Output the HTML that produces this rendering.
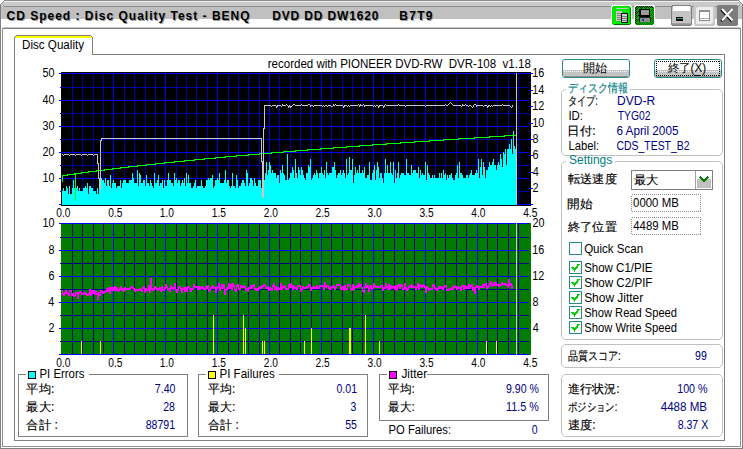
<!DOCTYPE html>
<html><head><meta charset="utf-8"><style>
html,body{margin:0;padding:0;width:743px;height:449px;overflow:hidden;background:#fff}
svg{display:block}
text{font-family:"Liberation Sans",sans-serif;white-space:pre;stroke-width:0px}
</style></head><body>
<svg width="743" height="449" viewBox="0 0 743 449" shape-rendering="crispEdges">
<defs><pattern id="dots" width="2" height="2" patternUnits="userSpaceOnUse"><rect width="1" height="1" fill="#000"/><rect x="1" y="1" width="1" height="1" fill="#004000"/></pattern></defs>
<rect x="0" y="0" width="743" height="449" fill="#ffffff"/>
<rect x="1" y="2" width="741" height="17" fill="#c4c4c4"/>
<rect x="5" y="0" width="733" height="1" fill="#8a8a8a"/>
<rect x="4" y="1" width="735" height="1" fill="#f0f0f0"/>
<rect x="1" y="2" width="741" height="4" fill="#cacaca"/>
<rect x="4" y="6" width="735" height="1" fill="#8c8c8c"/>
<rect x="3" y="5" width="1" height="1" fill="#8c8c8c"/>
<rect x="739" y="5" width="1" height="1" fill="#8c8c8c"/>
<rect x="1" y="7" width="741" height="12" fill="#c0c0c0"/>
<rect x="4" y="0" width="1" height="1" fill="#8a8a8a"/>
<rect x="738" y="0" width="1" height="1" fill="#8a8a8a"/>
<rect x="3" y="1" width="1" height="1" fill="#8a8a8a"/>
<rect x="739" y="1" width="1" height="1" fill="#8a8a8a"/>
<rect x="2" y="2" width="1" height="1" fill="#8a8a8a"/>
<rect x="740" y="2" width="1" height="1" fill="#8a8a8a"/>
<rect x="1" y="3" width="1" height="1" fill="#8a8a8a"/>
<rect x="741" y="3" width="1" height="1" fill="#8a8a8a"/>
<rect x="0" y="4" width="1" height="1" fill="#8a8a8a"/>
<rect x="742" y="4" width="1" height="1" fill="#8a8a8a"/>
<rect x="0" y="0" width="4" height="1" fill="#ffffff"/>
<rect x="0" y="1" width="3" height="1" fill="#ffffff"/>
<rect x="0" y="2" width="2" height="1" fill="#ffffff"/>
<rect x="0" y="3" width="1" height="1" fill="#ffffff"/>
<rect x="739" y="0" width="4" height="1" fill="#ffffff"/>
<rect x="740" y="1" width="3" height="1" fill="#ffffff"/>
<rect x="741" y="2" width="2" height="1" fill="#ffffff"/>
<rect x="742" y="3" width="1" height="1" fill="#ffffff"/>
<rect x="0" y="5" width="1" height="444" fill="#808080"/>
<rect x="1" y="19" width="1" height="429" fill="#ffffff"/>
<rect x="2" y="28" width="1" height="419" fill="#909090"/>
<rect x="742" y="5" width="1" height="444" fill="#808080"/>
<rect x="741" y="19" width="1" height="429" fill="#ffffff"/>
<rect x="740" y="28" width="1" height="419" fill="#909090"/>
<rect x="0" y="448" width="743" height="1" fill="#808080"/>
<rect x="2" y="446" width="739" height="1" fill="#909090"/>
<rect x="3" y="27" width="737" height="1" fill="#c8c8c8"/>
<rect x="2" y="28" width="739" height="1" fill="#808080"/>
<text stroke="#9a9a9a" x="7.51" y="21" font-size="12" fill="#9a9a9a" font-weight="bold" letter-spacing="0.999">CD Speed : Disc Quality Test - BENQ</text>
<text stroke="#000000" x="6.51" y="20" font-size="12" fill="#000000" font-weight="bold" letter-spacing="0.999">CD Speed : Disc Quality Test - BENQ</text>
<text stroke="#9a9a9a" x="273.20" y="21" font-size="12" fill="#9a9a9a" font-weight="bold" letter-spacing="0.856">DVD DD DW1620</text>
<text stroke="#000000" x="272.20" y="20" font-size="12" fill="#000000" font-weight="bold" letter-spacing="0.856">DVD DD DW1620</text>
<text stroke="#9a9a9a" x="400.20" y="21" font-size="12" fill="#9a9a9a" font-weight="bold" letter-spacing="1.301">B7T9</text>
<text stroke="#000000" x="399.20" y="20" font-size="12" fill="#000000" font-weight="bold" letter-spacing="1.301">B7T9</text>
<rect x="611" y="5" width="21" height="21" fill="#ffffff" rx="3"/>
<rect x="612" y="6" width="19" height="19" fill="#00e800" rx="3"/>
<rect x="614" y="24" width="16" height="1" fill="#007000"/>
<rect x="630" y="8" width="1" height="16" fill="#008800"/>
<rect x="616" y="11" width="6" height="10" fill="#c8c8c8"/>
<rect x="617" y="13" width="5" height="1" fill="#808080"/>
<rect x="617" y="15" width="5" height="1" fill="#808080"/>
<rect x="617" y="17" width="5" height="1" fill="#808080"/>
<rect x="617" y="19" width="5" height="1" fill="#808080"/>
<rect x="621" y="13" width="7" height="10" fill="#000000"/>
<rect x="622" y="14" width="5" height="8" fill="#d0d0d0"/>
<rect x="622" y="16" width="5" height="1" fill="#808080"/>
<rect x="622" y="18" width="5" height="1" fill="#808080"/>
<rect x="622" y="20" width="5" height="1" fill="#808080"/>
<rect x="616" y="8" width="12" height="1" fill="#b0d0b0"/>
<rect x="634" y="5" width="21" height="21" fill="#ffffff" rx="3"/>
<rect x="635" y="6" width="19" height="19" fill="#00b000" rx="3"/>
<rect x="635" y="8" width="1" height="1" fill="#000000"/>
<rect x="635" y="10" width="1" height="1" fill="#000000"/>
<rect x="635" y="12" width="1" height="1" fill="#000000"/>
<rect x="635" y="14" width="1" height="1" fill="#000000"/>
<rect x="635" y="16" width="1" height="1" fill="#000000"/>
<rect x="635" y="18" width="1" height="1" fill="#000000"/>
<rect x="635" y="20" width="1" height="1" fill="#000000"/>
<rect x="635" y="22" width="1" height="1" fill="#000000"/>
<rect x="636" y="7" width="1" height="1" fill="#000000"/>
<rect x="636" y="9" width="1" height="1" fill="#000000"/>
<rect x="636" y="11" width="1" height="1" fill="#000000"/>
<rect x="636" y="13" width="1" height="1" fill="#000000"/>
<rect x="636" y="15" width="1" height="1" fill="#000000"/>
<rect x="636" y="17" width="1" height="1" fill="#000000"/>
<rect x="636" y="19" width="1" height="1" fill="#000000"/>
<rect x="636" y="21" width="1" height="1" fill="#000000"/>
<rect x="636" y="23" width="1" height="1" fill="#000000"/>
<rect x="637" y="6" width="1" height="1" fill="#000000"/>
<rect x="637" y="8" width="1" height="1" fill="#000000"/>
<rect x="637" y="12" width="1" height="1" fill="#000000"/>
<rect x="637" y="16" width="1" height="1" fill="#006000"/>
<rect x="637" y="20" width="1" height="1" fill="#006000"/>
<rect x="637" y="24" width="1" height="1" fill="#006000"/>
<rect x="638" y="7" width="1" height="1" fill="#000000"/>
<rect x="638" y="11" width="1" height="1" fill="#000000"/>
<rect x="638" y="15" width="1" height="1" fill="#000000"/>
<rect x="638" y="19" width="1" height="1" fill="#006000"/>
<rect x="638" y="23" width="1" height="1" fill="#006000"/>
<rect x="639" y="6" width="1" height="1" fill="#000000"/>
<rect x="639" y="10" width="1" height="1" fill="#000000"/>
<rect x="639" y="14" width="1" height="1" fill="#000000"/>
<rect x="639" y="18" width="1" height="1" fill="#006000"/>
<rect x="639" y="22" width="1" height="1" fill="#006000"/>
<rect x="639" y="24" width="1" height="1" fill="#006000"/>
<rect x="640" y="7" width="1" height="1" fill="#000000"/>
<rect x="640" y="9" width="1" height="1" fill="#000000"/>
<rect x="640" y="13" width="1" height="1" fill="#000000"/>
<rect x="640" y="17" width="1" height="1" fill="#006000"/>
<rect x="640" y="21" width="1" height="1" fill="#006000"/>
<rect x="640" y="23" width="1" height="1" fill="#006000"/>
<rect x="641" y="6" width="1" height="1" fill="#000000"/>
<rect x="641" y="8" width="1" height="1" fill="#000000"/>
<rect x="641" y="12" width="1" height="1" fill="#000000"/>
<rect x="641" y="16" width="1" height="1" fill="#006000"/>
<rect x="641" y="20" width="1" height="1" fill="#006000"/>
<rect x="641" y="24" width="1" height="1" fill="#006000"/>
<rect x="642" y="7" width="1" height="1" fill="#000000"/>
<rect x="642" y="11" width="1" height="1" fill="#000000"/>
<rect x="642" y="15" width="1" height="1" fill="#000000"/>
<rect x="642" y="19" width="1" height="1" fill="#006000"/>
<rect x="642" y="23" width="1" height="1" fill="#006000"/>
<rect x="643" y="6" width="1" height="1" fill="#000000"/>
<rect x="643" y="10" width="1" height="1" fill="#000000"/>
<rect x="643" y="14" width="1" height="1" fill="#000000"/>
<rect x="643" y="18" width="1" height="1" fill="#006000"/>
<rect x="643" y="22" width="1" height="1" fill="#006000"/>
<rect x="643" y="24" width="1" height="1" fill="#006000"/>
<rect x="644" y="7" width="1" height="1" fill="#000000"/>
<rect x="644" y="9" width="1" height="1" fill="#000000"/>
<rect x="644" y="13" width="1" height="1" fill="#000000"/>
<rect x="644" y="17" width="1" height="1" fill="#006000"/>
<rect x="644" y="21" width="1" height="1" fill="#006000"/>
<rect x="644" y="23" width="1" height="1" fill="#006000"/>
<rect x="645" y="6" width="1" height="1" fill="#000000"/>
<rect x="645" y="8" width="1" height="1" fill="#006000"/>
<rect x="645" y="12" width="1" height="1" fill="#006000"/>
<rect x="645" y="16" width="1" height="1" fill="#006000"/>
<rect x="645" y="20" width="1" height="1" fill="#006000"/>
<rect x="645" y="24" width="1" height="1" fill="#006000"/>
<rect x="646" y="7" width="1" height="1" fill="#000000"/>
<rect x="646" y="11" width="1" height="1" fill="#006000"/>
<rect x="646" y="15" width="1" height="1" fill="#006000"/>
<rect x="646" y="19" width="1" height="1" fill="#006000"/>
<rect x="646" y="23" width="1" height="1" fill="#006000"/>
<rect x="647" y="6" width="1" height="1" fill="#000000"/>
<rect x="647" y="10" width="1" height="1" fill="#006000"/>
<rect x="647" y="14" width="1" height="1" fill="#006000"/>
<rect x="647" y="18" width="1" height="1" fill="#006000"/>
<rect x="647" y="22" width="1" height="1" fill="#006000"/>
<rect x="647" y="24" width="1" height="1" fill="#006000"/>
<rect x="648" y="7" width="1" height="1" fill="#000000"/>
<rect x="648" y="9" width="1" height="1" fill="#006000"/>
<rect x="648" y="13" width="1" height="1" fill="#006000"/>
<rect x="648" y="17" width="1" height="1" fill="#006000"/>
<rect x="648" y="21" width="1" height="1" fill="#006000"/>
<rect x="648" y="23" width="1" height="1" fill="#006000"/>
<rect x="649" y="6" width="1" height="1" fill="#000000"/>
<rect x="649" y="8" width="1" height="1" fill="#006000"/>
<rect x="649" y="12" width="1" height="1" fill="#006000"/>
<rect x="649" y="16" width="1" height="1" fill="#006000"/>
<rect x="649" y="20" width="1" height="1" fill="#006000"/>
<rect x="649" y="24" width="1" height="1" fill="#006000"/>
<rect x="650" y="7" width="1" height="1" fill="#000000"/>
<rect x="650" y="11" width="1" height="1" fill="#006000"/>
<rect x="650" y="15" width="1" height="1" fill="#006000"/>
<rect x="650" y="19" width="1" height="1" fill="#006000"/>
<rect x="650" y="23" width="1" height="1" fill="#006000"/>
<rect x="651" y="6" width="1" height="1" fill="#000000"/>
<rect x="651" y="10" width="1" height="1" fill="#006000"/>
<rect x="651" y="14" width="1" height="1" fill="#006000"/>
<rect x="651" y="18" width="1" height="1" fill="#006000"/>
<rect x="651" y="22" width="1" height="1" fill="#006000"/>
<rect x="651" y="24" width="1" height="1" fill="#006000"/>
<rect x="652" y="7" width="1" height="1" fill="#000000"/>
<rect x="652" y="9" width="1" height="1" fill="#006000"/>
<rect x="652" y="11" width="1" height="1" fill="#006000"/>
<rect x="652" y="13" width="1" height="1" fill="#006000"/>
<rect x="652" y="15" width="1" height="1" fill="#006000"/>
<rect x="652" y="17" width="1" height="1" fill="#006000"/>
<rect x="652" y="19" width="1" height="1" fill="#006000"/>
<rect x="652" y="21" width="1" height="1" fill="#006000"/>
<rect x="652" y="23" width="1" height="1" fill="#006000"/>
<rect x="653" y="8" width="1" height="1" fill="#006000"/>
<rect x="653" y="10" width="1" height="1" fill="#006000"/>
<rect x="653" y="12" width="1" height="1" fill="#006000"/>
<rect x="653" y="14" width="1" height="1" fill="#006000"/>
<rect x="653" y="16" width="1" height="1" fill="#006000"/>
<rect x="653" y="18" width="1" height="1" fill="#006000"/>
<rect x="653" y="20" width="1" height="1" fill="#006000"/>
<rect x="653" y="22" width="1" height="1" fill="#006000"/>
<rect x="639" y="9" width="11" height="8" fill="#000000"/>
<rect x="641" y="10" width="8" height="5" fill="#9a9a9a"/>
<rect x="639" y="17" width="12" height="5" fill="#202020"/>
<rect x="640" y="18" width="10" height="4" fill="#8c8c8c"/>
<rect x="642" y="19" width="2" height="2" fill="#2040a0"/>
<rect x="671" y="5" width="21" height="21" fill="#808080" rx="3"/>
<rect x="672" y="6" width="19" height="19" fill="#c4c4c4" rx="2"/>
<rect x="673" y="6" width="17" height="5" fill="#ffffff"/>
<rect x="672" y="23" width="19" height="1" fill="#a0a0a0"/>
<rect x="672" y="24" width="19" height="1" fill="#909090"/>
<rect x="676" y="17" width="7" height="4" fill="#000000"/>
<rect x="677" y="18" width="6" height="1" fill="#40a0a0"/>
<rect x="694" y="5" width="21" height="21" fill="#c8c8c8" rx="3"/>
<rect x="696" y="7" width="17" height="17" fill="#ececec" rx="2"/>
<rect x="699" y="10" width="11" height="11" fill="#909090"/>
<rect x="700" y="12" width="9" height="8" fill="#ffffff"/>
<rect x="700" y="18" width="9" height="1" fill="#b0b0b0"/>
<rect x="717" y="5" width="21" height="21" fill="#7c7c7c" rx="3"/>
<path d="M722 9 L732.5 20.5 M732.5 9 L722 20.5" stroke="#000" stroke-width="2.4" shape-rendering="auto" transform="translate(-0.7,0.7)"/>
<path d="M722 9 L732.5 20.5 M732.5 9 L722 20.5" stroke="#fff" stroke-width="2" shape-rendering="auto"/>
<rect x="16" y="35" width="75" height="1" fill="#808080"/>
<rect x="15" y="36" width="1" height="1" fill="#808080"/>
<rect x="91" y="36" width="1" height="1" fill="#808080"/>
<rect x="14" y="37" width="1" height="404" fill="#808080"/>
<rect x="92" y="37" width="1" height="18" fill="#808080"/>
<rect x="16" y="36" width="75" height="1" fill="#ffff00"/>
<rect x="15" y="37" width="77" height="1" fill="#ffff00"/>
<rect x="92" y="54" width="633" height="1" fill="#808080"/>
<rect x="724" y="54" width="1" height="387" fill="#808080"/>
<rect x="14" y="440" width="711" height="1" fill="#808080"/>
<text stroke="#000" x="22.05" y="49" font-size="12" fill="#000" textLength="61.98" lengthAdjust="spacingAndGlyphs">Disc Quality</text>
<rect x="61" y="72" width="470" height="134" fill="#000000"/>
<rect x="72" y="73" width="1" height="133" fill="#0000a8"/>
<rect x="82" y="73" width="1" height="133" fill="#0000a8"/>
<rect x="93" y="73" width="1" height="133" fill="#0000a8"/>
<rect x="103" y="73" width="1" height="133" fill="#0000a8"/>
<rect x="113" y="73" width="1" height="133" fill="#0000ff"/>
<rect x="124" y="73" width="1" height="133" fill="#0000a8"/>
<rect x="134" y="73" width="1" height="133" fill="#0000a8"/>
<rect x="145" y="73" width="1" height="133" fill="#0000a8"/>
<rect x="155" y="73" width="1" height="133" fill="#0000a8"/>
<rect x="165" y="73" width="1" height="133" fill="#0000ff"/>
<rect x="176" y="73" width="1" height="133" fill="#0000a8"/>
<rect x="186" y="73" width="1" height="133" fill="#0000a8"/>
<rect x="196" y="73" width="1" height="133" fill="#0000a8"/>
<rect x="207" y="73" width="1" height="133" fill="#0000a8"/>
<rect x="217" y="73" width="1" height="133" fill="#0000ff"/>
<rect x="228" y="73" width="1" height="133" fill="#0000a8"/>
<rect x="238" y="73" width="1" height="133" fill="#0000a8"/>
<rect x="248" y="73" width="1" height="133" fill="#0000a8"/>
<rect x="259" y="73" width="1" height="133" fill="#0000a8"/>
<rect x="269" y="73" width="1" height="133" fill="#0000ff"/>
<rect x="279" y="73" width="1" height="133" fill="#0000a8"/>
<rect x="290" y="73" width="1" height="133" fill="#0000a8"/>
<rect x="300" y="73" width="1" height="133" fill="#0000a8"/>
<rect x="311" y="73" width="1" height="133" fill="#0000a8"/>
<rect x="321" y="73" width="1" height="133" fill="#0000ff"/>
<rect x="331" y="73" width="1" height="133" fill="#0000a8"/>
<rect x="342" y="73" width="1" height="133" fill="#0000a8"/>
<rect x="352" y="73" width="1" height="133" fill="#0000a8"/>
<rect x="362" y="73" width="1" height="133" fill="#0000a8"/>
<rect x="373" y="73" width="1" height="133" fill="#0000ff"/>
<rect x="383" y="73" width="1" height="133" fill="#0000a8"/>
<rect x="394" y="73" width="1" height="133" fill="#0000a8"/>
<rect x="404" y="73" width="1" height="133" fill="#0000a8"/>
<rect x="414" y="73" width="1" height="133" fill="#0000a8"/>
<rect x="425" y="73" width="1" height="133" fill="#0000ff"/>
<rect x="435" y="73" width="1" height="133" fill="#0000a8"/>
<rect x="445" y="73" width="1" height="133" fill="#0000a8"/>
<rect x="456" y="73" width="1" height="133" fill="#0000a8"/>
<rect x="466" y="73" width="1" height="133" fill="#0000a8"/>
<rect x="477" y="73" width="1" height="133" fill="#0000ff"/>
<rect x="487" y="73" width="1" height="133" fill="#0000a8"/>
<rect x="497" y="73" width="1" height="133" fill="#0000a8"/>
<rect x="508" y="73" width="1" height="133" fill="#0000a8"/>
<rect x="518" y="73" width="1" height="133" fill="#0000a8"/>
<rect x="59" y="204" width="470" height="1" fill="#0000ff"/>
<rect x="60" y="191" width="469" height="1" fill="#0000a8"/>
<rect x="59" y="178" width="470" height="1" fill="#0000ff"/>
<rect x="60" y="165" width="469" height="1" fill="#0000a8"/>
<rect x="59" y="152" width="470" height="1" fill="#0000ff"/>
<rect x="60" y="139" width="469" height="1" fill="#0000a8"/>
<rect x="59" y="126" width="470" height="1" fill="#0000ff"/>
<rect x="60" y="113" width="469" height="1" fill="#0000a8"/>
<rect x="59" y="100" width="470" height="1" fill="#0000ff"/>
<rect x="60" y="87" width="469" height="1" fill="#0000a8"/>
<rect x="59" y="73" width="470" height="1" fill="#0000ff"/>
<rect x="529" y="204" width="4" height="1" fill="#0000ff"/>
<rect x="529" y="196" width="2" height="1" fill="#0000ff"/>
<rect x="529" y="188" width="4" height="1" fill="#0000ff"/>
<rect x="529" y="180" width="2" height="1" fill="#0000ff"/>
<rect x="529" y="172" width="4" height="1" fill="#0000ff"/>
<rect x="529" y="164" width="2" height="1" fill="#0000ff"/>
<rect x="529" y="155" width="4" height="1" fill="#0000ff"/>
<rect x="529" y="147" width="2" height="1" fill="#0000ff"/>
<rect x="529" y="139" width="4" height="1" fill="#0000ff"/>
<rect x="529" y="131" width="2" height="1" fill="#0000ff"/>
<rect x="529" y="123" width="4" height="1" fill="#0000ff"/>
<rect x="529" y="114" width="2" height="1" fill="#0000ff"/>
<rect x="529" y="106" width="4" height="1" fill="#0000ff"/>
<rect x="529" y="98" width="2" height="1" fill="#0000ff"/>
<rect x="529" y="90" width="4" height="1" fill="#0000ff"/>
<rect x="529" y="82" width="2" height="1" fill="#0000ff"/>
<rect x="529" y="73" width="4" height="1" fill="#0000ff"/>
<rect x="59" y="73" width="474" height="1" fill="#0000ff"/>
<path d="M62 205L62 191L63 191L63 188L64 188L64 191L65 191L65 191L66 191L66 186L67 186L67 188L68 188L68 194L69 194L69 186L70 186L70 194L71 194L71 194L72 194L72 188L73 188L73 180L74 180L74 188L75 188L75 188L76 188L76 188L77 188L77 186L78 186L78 191L79 191L79 188L80 188L80 191L81 191L81 191L82 191L82 191L83 191L83 188L84 188L84 188L85 188L85 186L86 186L86 188L87 188L87 183L88 183L88 194L89 194L89 186L90 186L90 186L91 186L91 188L92 188L92 188L93 188L93 191L94 191L94 191L95 191L95 191L96 191L96 194L97 194L97 188L98 188L98 194L99 194L99 188L100 188L100 173L101 173L101 178L102 178L102 180L103 180L103 180L104 180L104 183L105 183L105 178L106 178L106 186L107 186L107 180L108 180L108 180L109 180L109 186L110 186L110 175L111 175L111 188L112 188L112 183L113 183L113 180L114 180L114 183L115 183L115 183L116 183L116 188L117 188L117 186L118 186L118 186L119 186L119 186L120 186L120 180L121 180L121 188L122 188L122 183L123 183L123 180L124 180L124 180L125 180L125 180L126 180L126 183L127 183L127 183L128 183L128 183L129 183L129 180L130 180L130 180L131 180L131 180L132 180L132 173L133 173L133 178L134 178L134 183L135 183L135 183L136 183L136 183L137 183L137 170L138 170L138 186L139 186L139 173L140 173L140 175L141 175L141 183L142 183L142 183L143 183L143 180L144 180L144 180L145 180L145 186L146 186L146 175L147 175L147 183L148 183L148 183L149 183L149 186L150 186L150 180L151 180L151 183L152 183L152 186L153 186L153 188L154 188L154 173L155 173L155 183L156 183L156 183L157 183L157 180L158 180L158 175L159 175L159 186L160 186L160 183L161 183L161 183L162 183L162 180L163 180L163 188L164 188L164 180L165 180L165 186L166 186L166 186L167 186L167 180L168 180L168 173L169 173L169 180L170 180L170 180L171 180L171 183L172 183L172 183L173 183L173 186L174 186L174 173L175 173L175 180L176 180L176 178L177 178L177 183L178 183L178 180L179 180L179 180L180 180L180 186L181 186L181 183L182 183L182 180L183 180L183 183L184 183L184 178L185 178L185 186L186 186L186 173L187 173L187 183L188 183L188 175L189 175L189 183L190 183L190 183L191 183L191 188L192 188L192 188L193 188L193 186L194 186L194 183L195 183L195 180L196 180L196 188L197 188L197 186L198 186L198 186L199 186L199 186L200 186L200 186L201 186L201 180L202 180L202 186L203 186L203 188L204 188L204 188L205 188L205 186L206 186L206 180L207 180L207 180L208 180L208 178L209 178L209 180L210 180L210 178L211 178L211 178L212 178L212 175L213 175L213 188L214 188L214 186L215 186L215 180L216 180L216 180L217 180L217 178L218 178L218 180L219 180L219 173L220 173L220 183L221 183L221 183L222 183L222 183L223 183L223 183L224 183L224 180L225 180L225 170L226 170L226 183L227 183L227 180L228 180L228 180L229 180L229 186L230 186L230 188L231 188L231 186L232 186L232 173L233 173L233 186L234 186L234 186L235 186L235 188L236 188L236 175L237 175L237 180L238 180L238 188L239 188L239 186L240 186L240 186L241 186L241 183L242 183L242 180L243 180L243 180L244 180L244 183L245 183L245 186L246 186L246 170L247 170L247 173L248 173L248 186L249 186L249 183L250 183L250 178L251 178L251 178L252 178L252 180L253 180L253 186L254 186L254 178L255 178L255 183L256 183L256 186L257 186L257 186L258 186L258 180L259 180L259 180L260 180L260 180L261 180L261 188L262 188L262 196L263 196L263 194L264 194L264 180L265 180L265 173L266 173L266 162L267 162L267 175L268 175L268 170L269 170L269 162L270 162L270 165L271 165L271 173L272 173L272 170L273 170L273 173L274 173L274 173L275 173L275 173L276 173L276 178L277 178L277 175L278 175L278 175L279 175L279 183L280 183L280 170L281 170L281 173L282 173L282 165L283 165L283 173L284 173L284 175L285 175L285 180L286 180L286 180L287 180L287 154L288 154L288 180L289 180L289 178L290 178L290 173L291 173L291 173L292 173L292 167L293 167L293 170L294 170L294 178L295 178L295 159L296 159L296 173L297 173L297 178L298 178L298 167L299 167L299 170L300 170L300 175L301 175L301 167L302 167L302 170L303 170L303 175L304 175L304 178L305 178L305 180L306 180L306 173L307 173L307 173L308 173L308 165L309 165L309 167L310 167L310 159L311 159L311 180L312 180L312 178L313 178L313 175L314 175L314 173L315 173L315 175L316 175L316 170L317 170L317 173L318 173L318 178L319 178L319 173L320 173L320 173L321 173L321 167L322 167L322 173L323 173L323 175L324 175L324 170L325 170L325 178L326 178L326 162L327 162L327 173L328 173L328 175L329 175L329 173L330 173L330 173L331 173L331 173L332 173L332 167L333 167L333 167L334 167L334 162L335 162L335 170L336 170L336 178L337 178L337 175L338 175L338 173L339 173L339 173L340 173L340 170L341 170L341 175L342 175L342 173L343 173L343 170L344 170L344 173L345 173L345 178L346 178L346 159L347 159L347 175L348 175L348 173L349 173L349 157L350 157L350 170L351 170L351 170L352 170L352 159L353 159L353 183L354 183L354 175L355 175L355 167L356 167L356 173L357 173L357 170L358 170L358 173L359 173L359 165L360 165L360 173L361 173L361 173L362 173L362 170L363 170L363 173L364 173L364 167L365 167L365 178L366 178L366 178L367 178L367 175L368 175L368 175L369 175L369 162L370 162L370 180L371 180L371 180L372 180L372 173L373 173L373 170L374 170L374 165L375 165L375 180L376 180L376 170L377 170L377 162L378 162L378 167L379 167L379 178L380 178L380 173L381 173L381 173L382 173L382 178L383 178L383 183L384 183L384 173L385 173L385 159L386 159L386 173L387 173L387 165L388 165L388 173L389 173L389 173L390 173L390 162L391 162L391 173L392 173L392 175L393 175L393 162L394 162L394 183L395 183L395 170L396 170L396 178L397 178L397 173L398 173L398 162L399 162L399 178L400 178L400 175L401 175L401 173L402 173L402 173L403 173L403 173L404 173L404 175L405 175L405 175L406 175L406 159L407 159L407 173L408 173L408 173L409 173L409 175L410 175L410 175L411 175L411 165L412 165L412 173L413 173L413 170L414 170L414 170L415 170L415 170L416 170L416 173L417 173L417 173L418 173L418 167L419 167L419 178L420 178L420 170L421 170L421 175L422 175L422 173L423 173L423 175L424 175L424 175L425 175L425 162L426 162L426 180L427 180L427 165L428 165L428 173L429 173L429 175L430 175L430 178L431 178L431 178L432 178L432 175L433 175L433 178L434 178L434 175L435 175L435 178L436 178L436 178L437 178L437 178L438 178L438 178L439 178L439 173L440 173L440 178L441 178L441 173L442 173L442 178L443 178L443 170L444 170L444 175L445 175L445 173L446 173L446 180L447 180L447 175L448 175L448 178L449 178L449 175L450 175L450 175L451 175L451 173L452 173L452 178L453 178L453 180L454 180L454 180L455 180L455 175L456 175L456 173L457 173L457 165L458 165L458 178L459 178L459 162L460 162L460 173L461 173L461 173L462 173L462 175L463 175L463 178L464 178L464 178L465 178L465 178L466 178L466 175L467 175L467 175L468 175L468 178L469 178L469 175L470 175L470 173L471 173L471 170L472 170L472 175L473 175L473 175L474 175L474 175L475 175L475 173L476 173L476 170L477 170L477 173L478 173L478 159L479 159L479 178L480 178L480 167L481 167L481 159L482 159L482 175L483 175L483 162L484 162L484 167L485 167L485 178L486 178L486 170L487 170L487 170L488 170L488 167L489 167L489 162L490 162L490 165L491 165L491 165L492 165L492 162L493 162L493 159L494 159L494 165L495 165L495 165L496 165L496 170L497 170L497 165L498 165L498 162L499 162L499 165L500 165L500 154L501 154L501 159L502 159L502 167L503 167L503 152L504 152L504 154L505 154L505 149L506 149L506 165L507 165L507 149L508 149L508 149L509 149L509 144L510 144L510 149L511 149L511 139L512 139L512 154L513 154L513 131L514 131L514 146L515 146L515 149L516 149L516 141L517 141L517 205Z" fill="#00ffff" shape-rendering="crispEdges"/>
<rect x="75" y="173" width="1" height="28" fill="#00ff00"/>
<rect x="62" y="176" width="1" height="6" fill="#00ff00"/>
<rect x="62" y="175" width="1" height="1" fill="#00ff00"/>
<rect x="63" y="175" width="1" height="1" fill="#00ff00"/>
<rect x="64" y="175" width="1" height="1" fill="#00ff00"/>
<rect x="65" y="175" width="1" height="1" fill="#00ff00"/>
<rect x="66" y="175" width="1" height="1" fill="#00ff00"/>
<rect x="67" y="174" width="1" height="2" fill="#00ff00"/>
<rect x="68" y="174" width="1" height="1" fill="#00ff00"/>
<rect x="69" y="174" width="1" height="1" fill="#00ff00"/>
<rect x="70" y="174" width="1" height="1" fill="#00ff00"/>
<rect x="71" y="174" width="1" height="1" fill="#00ff00"/>
<rect x="72" y="174" width="1" height="1" fill="#00ff00"/>
<rect x="73" y="174" width="1" height="1" fill="#00ff00"/>
<rect x="74" y="173" width="1" height="2" fill="#00ff00"/>
<rect x="75" y="173" width="1" height="1" fill="#00ff00"/>
<rect x="76" y="173" width="1" height="1" fill="#00ff00"/>
<rect x="77" y="173" width="1" height="1" fill="#00ff00"/>
<rect x="78" y="173" width="1" height="1" fill="#00ff00"/>
<rect x="79" y="173" width="1" height="1" fill="#00ff00"/>
<rect x="80" y="173" width="1" height="1" fill="#00ff00"/>
<rect x="81" y="172" width="1" height="2" fill="#00ff00"/>
<rect x="82" y="172" width="1" height="1" fill="#00ff00"/>
<rect x="83" y="172" width="1" height="1" fill="#00ff00"/>
<rect x="84" y="172" width="1" height="1" fill="#00ff00"/>
<rect x="85" y="172" width="1" height="1" fill="#00ff00"/>
<rect x="86" y="172" width="1" height="1" fill="#00ff00"/>
<rect x="87" y="172" width="1" height="1" fill="#00ff00"/>
<rect x="88" y="171" width="1" height="2" fill="#00ff00"/>
<rect x="89" y="171" width="1" height="1" fill="#00ff00"/>
<rect x="90" y="171" width="1" height="1" fill="#00ff00"/>
<rect x="91" y="171" width="1" height="1" fill="#00ff00"/>
<rect x="92" y="171" width="1" height="1" fill="#00ff00"/>
<rect x="93" y="171" width="1" height="1" fill="#00ff00"/>
<rect x="94" y="171" width="1" height="1" fill="#00ff00"/>
<rect x="95" y="171" width="1" height="1" fill="#00ff00"/>
<rect x="96" y="170" width="1" height="2" fill="#00ff00"/>
<rect x="97" y="170" width="1" height="1" fill="#00ff00"/>
<rect x="98" y="170" width="1" height="1" fill="#00ff00"/>
<rect x="99" y="170" width="1" height="1" fill="#00ff00"/>
<rect x="100" y="170" width="1" height="1" fill="#00ff00"/>
<rect x="101" y="170" width="1" height="1" fill="#00ff00"/>
<rect x="102" y="170" width="1" height="1" fill="#00ff00"/>
<rect x="103" y="170" width="1" height="1" fill="#00ff00"/>
<rect x="104" y="169" width="1" height="2" fill="#00ff00"/>
<rect x="105" y="169" width="1" height="1" fill="#00ff00"/>
<rect x="106" y="169" width="1" height="1" fill="#00ff00"/>
<rect x="107" y="169" width="1" height="1" fill="#00ff00"/>
<rect x="108" y="169" width="1" height="1" fill="#00ff00"/>
<rect x="109" y="169" width="1" height="1" fill="#00ff00"/>
<rect x="110" y="169" width="1" height="1" fill="#00ff00"/>
<rect x="111" y="169" width="1" height="1" fill="#00ff00"/>
<rect x="112" y="168" width="1" height="2" fill="#00ff00"/>
<rect x="113" y="168" width="1" height="1" fill="#00ff00"/>
<rect x="114" y="168" width="1" height="1" fill="#00ff00"/>
<rect x="115" y="168" width="1" height="1" fill="#00ff00"/>
<rect x="116" y="168" width="1" height="1" fill="#00ff00"/>
<rect x="117" y="168" width="1" height="1" fill="#00ff00"/>
<rect x="118" y="168" width="1" height="1" fill="#00ff00"/>
<rect x="119" y="168" width="1" height="1" fill="#00ff00"/>
<rect x="120" y="167" width="1" height="2" fill="#00ff00"/>
<rect x="121" y="167" width="1" height="1" fill="#00ff00"/>
<rect x="122" y="167" width="1" height="1" fill="#00ff00"/>
<rect x="123" y="167" width="1" height="1" fill="#00ff00"/>
<rect x="124" y="167" width="1" height="1" fill="#00ff00"/>
<rect x="125" y="167" width="1" height="1" fill="#00ff00"/>
<rect x="126" y="167" width="1" height="1" fill="#00ff00"/>
<rect x="127" y="167" width="1" height="1" fill="#00ff00"/>
<rect x="128" y="166" width="1" height="2" fill="#00ff00"/>
<rect x="129" y="166" width="1" height="1" fill="#00ff00"/>
<rect x="130" y="166" width="1" height="1" fill="#00ff00"/>
<rect x="131" y="166" width="1" height="1" fill="#00ff00"/>
<rect x="132" y="166" width="1" height="1" fill="#00ff00"/>
<rect x="133" y="166" width="1" height="1" fill="#00ff00"/>
<rect x="134" y="166" width="1" height="1" fill="#00ff00"/>
<rect x="135" y="166" width="1" height="1" fill="#00ff00"/>
<rect x="136" y="166" width="1" height="1" fill="#00ff00"/>
<rect x="137" y="165" width="1" height="2" fill="#00ff00"/>
<rect x="138" y="165" width="1" height="1" fill="#00ff00"/>
<rect x="139" y="165" width="1" height="1" fill="#00ff00"/>
<rect x="140" y="165" width="1" height="1" fill="#00ff00"/>
<rect x="141" y="165" width="1" height="1" fill="#00ff00"/>
<rect x="142" y="165" width="1" height="1" fill="#00ff00"/>
<rect x="143" y="165" width="1" height="1" fill="#00ff00"/>
<rect x="144" y="165" width="1" height="1" fill="#00ff00"/>
<rect x="145" y="165" width="1" height="1" fill="#00ff00"/>
<rect x="146" y="164" width="1" height="2" fill="#00ff00"/>
<rect x="147" y="164" width="1" height="1" fill="#00ff00"/>
<rect x="148" y="164" width="1" height="1" fill="#00ff00"/>
<rect x="149" y="164" width="1" height="1" fill="#00ff00"/>
<rect x="150" y="164" width="1" height="1" fill="#00ff00"/>
<rect x="151" y="164" width="1" height="1" fill="#00ff00"/>
<rect x="152" y="164" width="1" height="1" fill="#00ff00"/>
<rect x="153" y="164" width="1" height="1" fill="#00ff00"/>
<rect x="154" y="164" width="1" height="1" fill="#00ff00"/>
<rect x="155" y="163" width="1" height="2" fill="#00ff00"/>
<rect x="156" y="163" width="1" height="1" fill="#00ff00"/>
<rect x="157" y="163" width="1" height="1" fill="#00ff00"/>
<rect x="158" y="163" width="1" height="1" fill="#00ff00"/>
<rect x="159" y="163" width="1" height="1" fill="#00ff00"/>
<rect x="160" y="163" width="1" height="1" fill="#00ff00"/>
<rect x="161" y="163" width="1" height="1" fill="#00ff00"/>
<rect x="162" y="163" width="1" height="1" fill="#00ff00"/>
<rect x="163" y="163" width="1" height="1" fill="#00ff00"/>
<rect x="164" y="162" width="1" height="2" fill="#00ff00"/>
<rect x="165" y="162" width="1" height="1" fill="#00ff00"/>
<rect x="166" y="162" width="1" height="1" fill="#00ff00"/>
<rect x="167" y="162" width="1" height="1" fill="#00ff00"/>
<rect x="168" y="162" width="1" height="1" fill="#00ff00"/>
<rect x="169" y="162" width="1" height="1" fill="#00ff00"/>
<rect x="170" y="162" width="1" height="1" fill="#00ff00"/>
<rect x="171" y="162" width="1" height="1" fill="#00ff00"/>
<rect x="172" y="162" width="1" height="1" fill="#00ff00"/>
<rect x="173" y="162" width="1" height="1" fill="#00ff00"/>
<rect x="174" y="161" width="1" height="2" fill="#00ff00"/>
<rect x="175" y="161" width="1" height="1" fill="#00ff00"/>
<rect x="176" y="161" width="1" height="1" fill="#00ff00"/>
<rect x="177" y="161" width="1" height="1" fill="#00ff00"/>
<rect x="178" y="161" width="1" height="1" fill="#00ff00"/>
<rect x="179" y="161" width="1" height="1" fill="#00ff00"/>
<rect x="180" y="161" width="1" height="1" fill="#00ff00"/>
<rect x="181" y="161" width="1" height="1" fill="#00ff00"/>
<rect x="182" y="161" width="1" height="1" fill="#00ff00"/>
<rect x="183" y="161" width="1" height="1" fill="#00ff00"/>
<rect x="184" y="160" width="1" height="2" fill="#00ff00"/>
<rect x="185" y="160" width="1" height="1" fill="#00ff00"/>
<rect x="186" y="160" width="1" height="1" fill="#00ff00"/>
<rect x="187" y="160" width="1" height="1" fill="#00ff00"/>
<rect x="188" y="160" width="1" height="1" fill="#00ff00"/>
<rect x="189" y="160" width="1" height="1" fill="#00ff00"/>
<rect x="190" y="160" width="1" height="1" fill="#00ff00"/>
<rect x="191" y="160" width="1" height="1" fill="#00ff00"/>
<rect x="192" y="160" width="1" height="1" fill="#00ff00"/>
<rect x="193" y="160" width="1" height="1" fill="#00ff00"/>
<rect x="194" y="159" width="1" height="2" fill="#00ff00"/>
<rect x="195" y="159" width="1" height="1" fill="#00ff00"/>
<rect x="196" y="159" width="1" height="1" fill="#00ff00"/>
<rect x="197" y="159" width="1" height="1" fill="#00ff00"/>
<rect x="198" y="159" width="1" height="1" fill="#00ff00"/>
<rect x="199" y="159" width="1" height="1" fill="#00ff00"/>
<rect x="200" y="159" width="1" height="1" fill="#00ff00"/>
<rect x="201" y="159" width="1" height="1" fill="#00ff00"/>
<rect x="202" y="159" width="1" height="1" fill="#00ff00"/>
<rect x="203" y="159" width="1" height="1" fill="#00ff00"/>
<rect x="204" y="158" width="1" height="2" fill="#00ff00"/>
<rect x="205" y="158" width="1" height="1" fill="#00ff00"/>
<rect x="206" y="158" width="1" height="1" fill="#00ff00"/>
<rect x="207" y="158" width="1" height="1" fill="#00ff00"/>
<rect x="208" y="158" width="1" height="1" fill="#00ff00"/>
<rect x="209" y="158" width="1" height="1" fill="#00ff00"/>
<rect x="210" y="158" width="1" height="1" fill="#00ff00"/>
<rect x="211" y="158" width="1" height="1" fill="#00ff00"/>
<rect x="212" y="158" width="1" height="1" fill="#00ff00"/>
<rect x="213" y="158" width="1" height="1" fill="#00ff00"/>
<rect x="214" y="158" width="1" height="1" fill="#00ff00"/>
<rect x="215" y="157" width="1" height="2" fill="#00ff00"/>
<rect x="216" y="157" width="1" height="1" fill="#00ff00"/>
<rect x="217" y="157" width="1" height="1" fill="#00ff00"/>
<rect x="218" y="157" width="1" height="1" fill="#00ff00"/>
<rect x="219" y="157" width="1" height="1" fill="#00ff00"/>
<rect x="220" y="157" width="1" height="1" fill="#00ff00"/>
<rect x="221" y="157" width="1" height="1" fill="#00ff00"/>
<rect x="222" y="157" width="1" height="1" fill="#00ff00"/>
<rect x="223" y="157" width="1" height="1" fill="#00ff00"/>
<rect x="224" y="157" width="1" height="1" fill="#00ff00"/>
<rect x="225" y="156" width="1" height="2" fill="#00ff00"/>
<rect x="226" y="156" width="1" height="1" fill="#00ff00"/>
<rect x="227" y="156" width="1" height="1" fill="#00ff00"/>
<rect x="228" y="156" width="1" height="1" fill="#00ff00"/>
<rect x="229" y="156" width="1" height="1" fill="#00ff00"/>
<rect x="230" y="156" width="1" height="1" fill="#00ff00"/>
<rect x="231" y="156" width="1" height="1" fill="#00ff00"/>
<rect x="232" y="156" width="1" height="1" fill="#00ff00"/>
<rect x="233" y="156" width="1" height="1" fill="#00ff00"/>
<rect x="234" y="156" width="1" height="1" fill="#00ff00"/>
<rect x="235" y="156" width="1" height="1" fill="#00ff00"/>
<rect x="236" y="155" width="1" height="2" fill="#00ff00"/>
<rect x="237" y="155" width="1" height="1" fill="#00ff00"/>
<rect x="238" y="155" width="1" height="1" fill="#00ff00"/>
<rect x="239" y="155" width="1" height="1" fill="#00ff00"/>
<rect x="240" y="155" width="1" height="1" fill="#00ff00"/>
<rect x="241" y="155" width="1" height="1" fill="#00ff00"/>
<rect x="242" y="155" width="1" height="1" fill="#00ff00"/>
<rect x="243" y="155" width="1" height="1" fill="#00ff00"/>
<rect x="244" y="155" width="1" height="1" fill="#00ff00"/>
<rect x="245" y="155" width="1" height="1" fill="#00ff00"/>
<rect x="246" y="155" width="1" height="1" fill="#00ff00"/>
<rect x="247" y="155" width="1" height="1" fill="#00ff00"/>
<rect x="248" y="154" width="1" height="2" fill="#00ff00"/>
<rect x="249" y="154" width="1" height="1" fill="#00ff00"/>
<rect x="250" y="154" width="1" height="1" fill="#00ff00"/>
<rect x="251" y="154" width="1" height="1" fill="#00ff00"/>
<rect x="252" y="154" width="1" height="1" fill="#00ff00"/>
<rect x="253" y="154" width="1" height="1" fill="#00ff00"/>
<rect x="254" y="154" width="1" height="1" fill="#00ff00"/>
<rect x="255" y="154" width="1" height="1" fill="#00ff00"/>
<rect x="256" y="154" width="1" height="1" fill="#00ff00"/>
<rect x="257" y="154" width="1" height="1" fill="#00ff00"/>
<rect x="258" y="154" width="1" height="1" fill="#00ff00"/>
<rect x="259" y="153" width="1" height="2" fill="#00ff00"/>
<rect x="260" y="153" width="1" height="1" fill="#00ff00"/>
<rect x="261" y="153" width="1" height="1" fill="#00ff00"/>
<rect x="262" y="153" width="1" height="1" fill="#00ff00"/>
<rect x="263" y="153" width="1" height="1" fill="#00ff00"/>
<rect x="264" y="153" width="1" height="1" fill="#00ff00"/>
<rect x="265" y="153" width="1" height="1" fill="#00ff00"/>
<rect x="266" y="153" width="1" height="1" fill="#00ff00"/>
<rect x="267" y="153" width="1" height="1" fill="#00ff00"/>
<rect x="268" y="153" width="1" height="1" fill="#00ff00"/>
<rect x="269" y="153" width="1" height="1" fill="#00ff00"/>
<rect x="270" y="153" width="1" height="1" fill="#00ff00"/>
<rect x="271" y="152" width="1" height="2" fill="#00ff00"/>
<rect x="272" y="152" width="1" height="1" fill="#00ff00"/>
<rect x="273" y="152" width="1" height="1" fill="#00ff00"/>
<rect x="274" y="152" width="1" height="1" fill="#00ff00"/>
<rect x="275" y="152" width="1" height="1" fill="#00ff00"/>
<rect x="276" y="152" width="1" height="1" fill="#00ff00"/>
<rect x="277" y="152" width="1" height="1" fill="#00ff00"/>
<rect x="278" y="152" width="1" height="1" fill="#00ff00"/>
<rect x="279" y="152" width="1" height="1" fill="#00ff00"/>
<rect x="280" y="152" width="1" height="1" fill="#00ff00"/>
<rect x="281" y="152" width="1" height="1" fill="#00ff00"/>
<rect x="282" y="152" width="1" height="1" fill="#00ff00"/>
<rect x="283" y="151" width="1" height="2" fill="#00ff00"/>
<rect x="284" y="151" width="1" height="1" fill="#00ff00"/>
<rect x="285" y="151" width="1" height="1" fill="#00ff00"/>
<rect x="286" y="151" width="1" height="1" fill="#00ff00"/>
<rect x="287" y="151" width="1" height="1" fill="#00ff00"/>
<rect x="288" y="151" width="1" height="1" fill="#00ff00"/>
<rect x="289" y="151" width="1" height="1" fill="#00ff00"/>
<rect x="290" y="151" width="1" height="1" fill="#00ff00"/>
<rect x="291" y="151" width="1" height="1" fill="#00ff00"/>
<rect x="292" y="151" width="1" height="1" fill="#00ff00"/>
<rect x="293" y="151" width="1" height="1" fill="#00ff00"/>
<rect x="294" y="151" width="1" height="1" fill="#00ff00"/>
<rect x="295" y="150" width="1" height="2" fill="#00ff00"/>
<rect x="296" y="150" width="1" height="1" fill="#00ff00"/>
<rect x="297" y="150" width="1" height="1" fill="#00ff00"/>
<rect x="298" y="150" width="1" height="1" fill="#00ff00"/>
<rect x="299" y="150" width="1" height="1" fill="#00ff00"/>
<rect x="300" y="150" width="1" height="1" fill="#00ff00"/>
<rect x="301" y="150" width="1" height="1" fill="#00ff00"/>
<rect x="302" y="150" width="1" height="1" fill="#00ff00"/>
<rect x="303" y="150" width="1" height="1" fill="#00ff00"/>
<rect x="304" y="150" width="1" height="1" fill="#00ff00"/>
<rect x="305" y="150" width="1" height="1" fill="#00ff00"/>
<rect x="306" y="150" width="1" height="1" fill="#00ff00"/>
<rect x="307" y="149" width="1" height="2" fill="#00ff00"/>
<rect x="308" y="149" width="1" height="1" fill="#00ff00"/>
<rect x="309" y="149" width="1" height="1" fill="#00ff00"/>
<rect x="310" y="149" width="1" height="1" fill="#00ff00"/>
<rect x="311" y="149" width="1" height="1" fill="#00ff00"/>
<rect x="312" y="149" width="1" height="1" fill="#00ff00"/>
<rect x="313" y="149" width="1" height="1" fill="#00ff00"/>
<rect x="314" y="149" width="1" height="1" fill="#00ff00"/>
<rect x="315" y="149" width="1" height="1" fill="#00ff00"/>
<rect x="316" y="149" width="1" height="1" fill="#00ff00"/>
<rect x="317" y="149" width="1" height="1" fill="#00ff00"/>
<rect x="318" y="149" width="1" height="1" fill="#00ff00"/>
<rect x="319" y="149" width="1" height="1" fill="#00ff00"/>
<rect x="320" y="148" width="1" height="2" fill="#00ff00"/>
<rect x="321" y="148" width="1" height="1" fill="#00ff00"/>
<rect x="322" y="148" width="1" height="1" fill="#00ff00"/>
<rect x="323" y="148" width="1" height="1" fill="#00ff00"/>
<rect x="324" y="148" width="1" height="1" fill="#00ff00"/>
<rect x="325" y="148" width="1" height="1" fill="#00ff00"/>
<rect x="326" y="148" width="1" height="1" fill="#00ff00"/>
<rect x="327" y="148" width="1" height="1" fill="#00ff00"/>
<rect x="328" y="148" width="1" height="1" fill="#00ff00"/>
<rect x="329" y="148" width="1" height="1" fill="#00ff00"/>
<rect x="330" y="148" width="1" height="1" fill="#00ff00"/>
<rect x="331" y="148" width="1" height="1" fill="#00ff00"/>
<rect x="332" y="148" width="1" height="1" fill="#00ff00"/>
<rect x="333" y="147" width="1" height="2" fill="#00ff00"/>
<rect x="334" y="147" width="1" height="1" fill="#00ff00"/>
<rect x="335" y="147" width="1" height="1" fill="#00ff00"/>
<rect x="336" y="147" width="1" height="1" fill="#00ff00"/>
<rect x="337" y="147" width="1" height="1" fill="#00ff00"/>
<rect x="338" y="147" width="1" height="1" fill="#00ff00"/>
<rect x="339" y="147" width="1" height="1" fill="#00ff00"/>
<rect x="340" y="147" width="1" height="1" fill="#00ff00"/>
<rect x="341" y="147" width="1" height="1" fill="#00ff00"/>
<rect x="342" y="147" width="1" height="1" fill="#00ff00"/>
<rect x="343" y="147" width="1" height="1" fill="#00ff00"/>
<rect x="344" y="147" width="1" height="1" fill="#00ff00"/>
<rect x="345" y="147" width="1" height="1" fill="#00ff00"/>
<rect x="346" y="146" width="1" height="2" fill="#00ff00"/>
<rect x="347" y="146" width="1" height="1" fill="#00ff00"/>
<rect x="348" y="146" width="1" height="1" fill="#00ff00"/>
<rect x="349" y="146" width="1" height="1" fill="#00ff00"/>
<rect x="350" y="146" width="1" height="1" fill="#00ff00"/>
<rect x="351" y="146" width="1" height="1" fill="#00ff00"/>
<rect x="352" y="146" width="1" height="1" fill="#00ff00"/>
<rect x="353" y="146" width="1" height="1" fill="#00ff00"/>
<rect x="354" y="146" width="1" height="1" fill="#00ff00"/>
<rect x="355" y="146" width="1" height="1" fill="#00ff00"/>
<rect x="356" y="146" width="1" height="1" fill="#00ff00"/>
<rect x="357" y="146" width="1" height="1" fill="#00ff00"/>
<rect x="358" y="146" width="1" height="1" fill="#00ff00"/>
<rect x="359" y="145" width="1" height="2" fill="#00ff00"/>
<rect x="360" y="145" width="1" height="1" fill="#00ff00"/>
<rect x="361" y="145" width="1" height="1" fill="#00ff00"/>
<rect x="362" y="145" width="1" height="1" fill="#00ff00"/>
<rect x="363" y="145" width="1" height="1" fill="#00ff00"/>
<rect x="364" y="145" width="1" height="1" fill="#00ff00"/>
<rect x="365" y="145" width="1" height="1" fill="#00ff00"/>
<rect x="366" y="145" width="1" height="1" fill="#00ff00"/>
<rect x="367" y="145" width="1" height="1" fill="#00ff00"/>
<rect x="368" y="145" width="1" height="1" fill="#00ff00"/>
<rect x="369" y="145" width="1" height="1" fill="#00ff00"/>
<rect x="370" y="145" width="1" height="1" fill="#00ff00"/>
<rect x="371" y="145" width="1" height="1" fill="#00ff00"/>
<rect x="372" y="144" width="1" height="2" fill="#00ff00"/>
<rect x="373" y="144" width="1" height="1" fill="#00ff00"/>
<rect x="374" y="144" width="1" height="1" fill="#00ff00"/>
<rect x="375" y="144" width="1" height="1" fill="#00ff00"/>
<rect x="376" y="144" width="1" height="1" fill="#00ff00"/>
<rect x="377" y="144" width="1" height="1" fill="#00ff00"/>
<rect x="378" y="144" width="1" height="1" fill="#00ff00"/>
<rect x="379" y="144" width="1" height="1" fill="#00ff00"/>
<rect x="380" y="144" width="1" height="1" fill="#00ff00"/>
<rect x="381" y="144" width="1" height="1" fill="#00ff00"/>
<rect x="382" y="144" width="1" height="1" fill="#00ff00"/>
<rect x="383" y="144" width="1" height="1" fill="#00ff00"/>
<rect x="384" y="144" width="1" height="1" fill="#00ff00"/>
<rect x="385" y="144" width="1" height="1" fill="#00ff00"/>
<rect x="386" y="143" width="1" height="2" fill="#00ff00"/>
<rect x="387" y="143" width="1" height="1" fill="#00ff00"/>
<rect x="388" y="143" width="1" height="1" fill="#00ff00"/>
<rect x="389" y="143" width="1" height="1" fill="#00ff00"/>
<rect x="390" y="143" width="1" height="1" fill="#00ff00"/>
<rect x="391" y="143" width="1" height="1" fill="#00ff00"/>
<rect x="392" y="143" width="1" height="1" fill="#00ff00"/>
<rect x="393" y="143" width="1" height="1" fill="#00ff00"/>
<rect x="394" y="143" width="1" height="1" fill="#00ff00"/>
<rect x="395" y="143" width="1" height="1" fill="#00ff00"/>
<rect x="396" y="143" width="1" height="1" fill="#00ff00"/>
<rect x="397" y="143" width="1" height="1" fill="#00ff00"/>
<rect x="398" y="143" width="1" height="1" fill="#00ff00"/>
<rect x="399" y="143" width="1" height="1" fill="#00ff00"/>
<rect x="400" y="142" width="1" height="2" fill="#00ff00"/>
<rect x="401" y="142" width="1" height="1" fill="#00ff00"/>
<rect x="402" y="142" width="1" height="1" fill="#00ff00"/>
<rect x="403" y="142" width="1" height="1" fill="#00ff00"/>
<rect x="404" y="142" width="1" height="1" fill="#00ff00"/>
<rect x="405" y="142" width="1" height="1" fill="#00ff00"/>
<rect x="406" y="142" width="1" height="1" fill="#00ff00"/>
<rect x="407" y="142" width="1" height="1" fill="#00ff00"/>
<rect x="408" y="142" width="1" height="1" fill="#00ff00"/>
<rect x="409" y="142" width="1" height="1" fill="#00ff00"/>
<rect x="410" y="142" width="1" height="1" fill="#00ff00"/>
<rect x="411" y="142" width="1" height="1" fill="#00ff00"/>
<rect x="412" y="142" width="1" height="1" fill="#00ff00"/>
<rect x="413" y="142" width="1" height="1" fill="#00ff00"/>
<rect x="414" y="141" width="1" height="2" fill="#00ff00"/>
<rect x="415" y="141" width="1" height="1" fill="#00ff00"/>
<rect x="416" y="141" width="1" height="1" fill="#00ff00"/>
<rect x="417" y="141" width="1" height="1" fill="#00ff00"/>
<rect x="418" y="141" width="1" height="1" fill="#00ff00"/>
<rect x="419" y="141" width="1" height="1" fill="#00ff00"/>
<rect x="420" y="141" width="1" height="1" fill="#00ff00"/>
<rect x="421" y="141" width="1" height="1" fill="#00ff00"/>
<rect x="422" y="141" width="1" height="1" fill="#00ff00"/>
<rect x="423" y="141" width="1" height="1" fill="#00ff00"/>
<rect x="424" y="141" width="1" height="1" fill="#00ff00"/>
<rect x="425" y="141" width="1" height="1" fill="#00ff00"/>
<rect x="426" y="141" width="1" height="1" fill="#00ff00"/>
<rect x="427" y="141" width="1" height="1" fill="#00ff00"/>
<rect x="428" y="141" width="1" height="1" fill="#00ff00"/>
<rect x="429" y="140" width="1" height="2" fill="#00ff00"/>
<rect x="430" y="140" width="1" height="1" fill="#00ff00"/>
<rect x="431" y="140" width="1" height="1" fill="#00ff00"/>
<rect x="432" y="140" width="1" height="1" fill="#00ff00"/>
<rect x="433" y="140" width="1" height="1" fill="#00ff00"/>
<rect x="434" y="140" width="1" height="1" fill="#00ff00"/>
<rect x="435" y="140" width="1" height="1" fill="#00ff00"/>
<rect x="436" y="140" width="1" height="1" fill="#00ff00"/>
<rect x="437" y="140" width="1" height="1" fill="#00ff00"/>
<rect x="438" y="140" width="1" height="1" fill="#00ff00"/>
<rect x="439" y="140" width="1" height="1" fill="#00ff00"/>
<rect x="440" y="140" width="1" height="1" fill="#00ff00"/>
<rect x="441" y="140" width="1" height="1" fill="#00ff00"/>
<rect x="442" y="140" width="1" height="1" fill="#00ff00"/>
<rect x="443" y="139" width="1" height="2" fill="#00ff00"/>
<rect x="444" y="139" width="1" height="1" fill="#00ff00"/>
<rect x="445" y="139" width="1" height="1" fill="#00ff00"/>
<rect x="446" y="139" width="1" height="1" fill="#00ff00"/>
<rect x="447" y="139" width="1" height="1" fill="#00ff00"/>
<rect x="448" y="139" width="1" height="1" fill="#00ff00"/>
<rect x="449" y="139" width="1" height="1" fill="#00ff00"/>
<rect x="450" y="139" width="1" height="1" fill="#00ff00"/>
<rect x="451" y="139" width="1" height="1" fill="#00ff00"/>
<rect x="452" y="139" width="1" height="1" fill="#00ff00"/>
<rect x="453" y="139" width="1" height="1" fill="#00ff00"/>
<rect x="454" y="139" width="1" height="1" fill="#00ff00"/>
<rect x="455" y="139" width="1" height="1" fill="#00ff00"/>
<rect x="456" y="139" width="1" height="1" fill="#00ff00"/>
<rect x="457" y="139" width="1" height="1" fill="#00ff00"/>
<rect x="458" y="138" width="1" height="2" fill="#00ff00"/>
<rect x="459" y="138" width="1" height="1" fill="#00ff00"/>
<rect x="460" y="138" width="1" height="1" fill="#00ff00"/>
<rect x="461" y="138" width="1" height="1" fill="#00ff00"/>
<rect x="462" y="138" width="1" height="1" fill="#00ff00"/>
<rect x="463" y="138" width="1" height="1" fill="#00ff00"/>
<rect x="464" y="138" width="1" height="1" fill="#00ff00"/>
<rect x="465" y="138" width="1" height="1" fill="#00ff00"/>
<rect x="466" y="138" width="1" height="1" fill="#00ff00"/>
<rect x="467" y="138" width="1" height="1" fill="#00ff00"/>
<rect x="468" y="138" width="1" height="1" fill="#00ff00"/>
<rect x="469" y="138" width="1" height="1" fill="#00ff00"/>
<rect x="470" y="138" width="1" height="1" fill="#00ff00"/>
<rect x="471" y="138" width="1" height="1" fill="#00ff00"/>
<rect x="472" y="138" width="1" height="1" fill="#00ff00"/>
<rect x="473" y="138" width="1" height="1" fill="#00ff00"/>
<rect x="474" y="137" width="1" height="2" fill="#00ff00"/>
<rect x="475" y="137" width="1" height="1" fill="#00ff00"/>
<rect x="476" y="137" width="1" height="1" fill="#00ff00"/>
<rect x="477" y="137" width="1" height="1" fill="#00ff00"/>
<rect x="478" y="137" width="1" height="1" fill="#00ff00"/>
<rect x="479" y="137" width="1" height="1" fill="#00ff00"/>
<rect x="480" y="137" width="1" height="1" fill="#00ff00"/>
<rect x="481" y="137" width="1" height="1" fill="#00ff00"/>
<rect x="482" y="137" width="1" height="1" fill="#00ff00"/>
<rect x="483" y="137" width="1" height="1" fill="#00ff00"/>
<rect x="484" y="137" width="1" height="1" fill="#00ff00"/>
<rect x="485" y="137" width="1" height="1" fill="#00ff00"/>
<rect x="486" y="137" width="1" height="1" fill="#00ff00"/>
<rect x="487" y="137" width="1" height="1" fill="#00ff00"/>
<rect x="488" y="137" width="1" height="1" fill="#00ff00"/>
<rect x="489" y="136" width="1" height="2" fill="#00ff00"/>
<rect x="490" y="136" width="1" height="1" fill="#00ff00"/>
<rect x="491" y="136" width="1" height="1" fill="#00ff00"/>
<rect x="492" y="136" width="1" height="1" fill="#00ff00"/>
<rect x="493" y="136" width="1" height="1" fill="#00ff00"/>
<rect x="494" y="136" width="1" height="1" fill="#00ff00"/>
<rect x="495" y="136" width="1" height="1" fill="#00ff00"/>
<rect x="496" y="136" width="1" height="1" fill="#00ff00"/>
<rect x="497" y="136" width="1" height="1" fill="#00ff00"/>
<rect x="498" y="136" width="1" height="1" fill="#00ff00"/>
<rect x="499" y="136" width="1" height="1" fill="#00ff00"/>
<rect x="500" y="136" width="1" height="1" fill="#00ff00"/>
<rect x="501" y="136" width="1" height="1" fill="#00ff00"/>
<rect x="502" y="136" width="1" height="1" fill="#00ff00"/>
<rect x="503" y="136" width="1" height="1" fill="#00ff00"/>
<rect x="504" y="135" width="1" height="2" fill="#00ff00"/>
<rect x="505" y="135" width="1" height="1" fill="#00ff00"/>
<rect x="506" y="135" width="1" height="1" fill="#00ff00"/>
<rect x="507" y="135" width="1" height="1" fill="#00ff00"/>
<rect x="508" y="135" width="1" height="1" fill="#00ff00"/>
<rect x="509" y="135" width="1" height="1" fill="#00ff00"/>
<rect x="510" y="135" width="1" height="1" fill="#00ff00"/>
<rect x="511" y="135" width="1" height="1" fill="#00ff00"/>
<rect x="512" y="135" width="1" height="1" fill="#00ff00"/>
<rect x="513" y="135" width="1" height="1" fill="#00ff00"/>
<rect x="514" y="135" width="1" height="1" fill="#00ff00"/>
<rect x="515" y="135" width="1" height="1" fill="#00ff00"/>
<rect x="516" y="135" width="1" height="1" fill="#00ff00"/>
<rect x="62" y="154" width="1" height="1" fill="#c8c8c8"/>
<rect x="63" y="155" width="1" height="1" fill="#c8c8c8"/>
<rect x="64" y="154" width="1" height="1" fill="#c8c8c8"/>
<rect x="65" y="154" width="1" height="1" fill="#c8c8c8"/>
<rect x="66" y="154" width="1" height="1" fill="#c8c8c8"/>
<rect x="67" y="154" width="1" height="1" fill="#c8c8c8"/>
<rect x="68" y="154" width="1" height="1" fill="#c8c8c8"/>
<rect x="69" y="155" width="1" height="1" fill="#c8c8c8"/>
<rect x="70" y="154" width="1" height="1" fill="#c8c8c8"/>
<rect x="71" y="154" width="1" height="1" fill="#c8c8c8"/>
<rect x="72" y="154" width="1" height="1" fill="#c8c8c8"/>
<rect x="73" y="154" width="1" height="1" fill="#c8c8c8"/>
<rect x="74" y="154" width="1" height="1" fill="#c8c8c8"/>
<rect x="75" y="155" width="1" height="1" fill="#c8c8c8"/>
<rect x="76" y="154" width="1" height="1" fill="#c8c8c8"/>
<rect x="77" y="154" width="1" height="1" fill="#c8c8c8"/>
<rect x="78" y="154" width="1" height="1" fill="#c8c8c8"/>
<rect x="79" y="154" width="1" height="1" fill="#c8c8c8"/>
<rect x="80" y="154" width="1" height="1" fill="#c8c8c8"/>
<rect x="81" y="155" width="1" height="1" fill="#c8c8c8"/>
<rect x="82" y="154" width="1" height="1" fill="#c8c8c8"/>
<rect x="83" y="154" width="1" height="1" fill="#c8c8c8"/>
<rect x="84" y="154" width="1" height="1" fill="#c8c8c8"/>
<rect x="85" y="154" width="1" height="1" fill="#c8c8c8"/>
<rect x="86" y="154" width="1" height="1" fill="#c8c8c8"/>
<rect x="87" y="155" width="1" height="1" fill="#c8c8c8"/>
<rect x="88" y="154" width="1" height="1" fill="#c8c8c8"/>
<rect x="89" y="154" width="1" height="1" fill="#c8c8c8"/>
<rect x="90" y="154" width="1" height="1" fill="#c8c8c8"/>
<rect x="91" y="154" width="1" height="1" fill="#c8c8c8"/>
<rect x="92" y="154" width="1" height="1" fill="#c8c8c8"/>
<rect x="93" y="155" width="1" height="1" fill="#c8c8c8"/>
<rect x="94" y="154" width="1" height="1" fill="#c8c8c8"/>
<rect x="95" y="154" width="1" height="1" fill="#c8c8c8"/>
<rect x="96" y="154" width="1" height="1" fill="#c8c8c8"/>
<rect x="97" y="154" width="1" height="1" fill="#c8c8c8"/>
<rect x="97" y="154" width="1" height="10" fill="#c8c8c8"/>
<rect x="98" y="163" width="1" height="16" fill="#c8c8c8"/>
<rect x="99" y="178" width="1" height="11" fill="#c8c8c8"/>
<rect x="100" y="140" width="1" height="49" fill="#c8c8c8"/>
<rect x="101" y="138" width="1" height="3" fill="#c8c8c8"/>
<rect x="101" y="138" width="160" height="1" fill="#c8c8c8"/>
<rect x="261" y="138" width="1" height="24" fill="#c8c8c8"/>
<rect x="262" y="161" width="1" height="37" fill="#c8c8c8"/>
<rect x="263" y="128" width="1" height="70" fill="#c8c8c8"/>
<rect x="264" y="105" width="1" height="24" fill="#c8c8c8"/>
<rect x="265" y="105" width="1" height="1" fill="#c8c8c8"/>
<rect x="266" y="105" width="1" height="1" fill="#c8c8c8"/>
<rect x="267" y="105" width="1" height="1" fill="#c8c8c8"/>
<rect x="268" y="105" width="1" height="1" fill="#c8c8c8"/>
<rect x="269" y="105" width="1" height="1" fill="#c8c8c8"/>
<rect x="270" y="105" width="1" height="1" fill="#c8c8c8"/>
<rect x="271" y="106" width="1" height="1" fill="#c8c8c8"/>
<rect x="272" y="105" width="1" height="1" fill="#c8c8c8"/>
<rect x="273" y="105" width="1" height="1" fill="#c8c8c8"/>
<rect x="274" y="105" width="1" height="1" fill="#c8c8c8"/>
<rect x="275" y="105" width="1" height="1" fill="#c8c8c8"/>
<rect x="276" y="106" width="1" height="2" fill="#c8c8c8"/>
<rect x="277" y="105" width="1" height="2" fill="#c8c8c8"/>
<rect x="278" y="105" width="1" height="1" fill="#c8c8c8"/>
<rect x="279" y="105" width="1" height="1" fill="#c8c8c8"/>
<rect x="280" y="105" width="1" height="1" fill="#c8c8c8"/>
<rect x="281" y="106" width="1" height="1" fill="#c8c8c8"/>
<rect x="282" y="104" width="1" height="2" fill="#c8c8c8"/>
<rect x="283" y="105" width="1" height="1" fill="#c8c8c8"/>
<rect x="284" y="105" width="1" height="1" fill="#c8c8c8"/>
<rect x="285" y="105" width="1" height="1" fill="#c8c8c8"/>
<rect x="286" y="104" width="1" height="1" fill="#c8c8c8"/>
<rect x="287" y="105" width="1" height="1" fill="#c8c8c8"/>
<rect x="288" y="106" width="1" height="2" fill="#c8c8c8"/>
<rect x="289" y="105" width="1" height="2" fill="#c8c8c8"/>
<rect x="290" y="106" width="1" height="2" fill="#c8c8c8"/>
<rect x="291" y="106" width="1" height="1" fill="#c8c8c8"/>
<rect x="292" y="105" width="1" height="1" fill="#c8c8c8"/>
<rect x="293" y="104" width="1" height="1" fill="#c8c8c8"/>
<rect x="294" y="104" width="1" height="1" fill="#c8c8c8"/>
<rect x="295" y="105" width="1" height="1" fill="#c8c8c8"/>
<rect x="296" y="105" width="1" height="1" fill="#c8c8c8"/>
<rect x="297" y="105" width="1" height="1" fill="#c8c8c8"/>
<rect x="298" y="105" width="1" height="1" fill="#c8c8c8"/>
<rect x="299" y="105" width="1" height="1" fill="#c8c8c8"/>
<rect x="300" y="105" width="1" height="1" fill="#c8c8c8"/>
<rect x="301" y="104" width="1" height="1" fill="#c8c8c8"/>
<rect x="302" y="105" width="1" height="1" fill="#c8c8c8"/>
<rect x="303" y="105" width="1" height="1" fill="#c8c8c8"/>
<rect x="304" y="105" width="1" height="1" fill="#c8c8c8"/>
<rect x="305" y="105" width="1" height="1" fill="#c8c8c8"/>
<rect x="306" y="105" width="1" height="1" fill="#c8c8c8"/>
<rect x="307" y="105" width="1" height="1" fill="#c8c8c8"/>
<rect x="308" y="104" width="1" height="1" fill="#c8c8c8"/>
<rect x="309" y="104" width="1" height="1" fill="#c8c8c8"/>
<rect x="310" y="105" width="1" height="2" fill="#c8c8c8"/>
<rect x="311" y="105" width="1" height="1" fill="#c8c8c8"/>
<rect x="312" y="105" width="1" height="1" fill="#c8c8c8"/>
<rect x="313" y="106" width="1" height="1" fill="#c8c8c8"/>
<rect x="314" y="105" width="1" height="1" fill="#c8c8c8"/>
<rect x="315" y="105" width="1" height="1" fill="#c8c8c8"/>
<rect x="316" y="105" width="1" height="1" fill="#c8c8c8"/>
<rect x="317" y="105" width="1" height="1" fill="#c8c8c8"/>
<rect x="318" y="105" width="1" height="1" fill="#c8c8c8"/>
<rect x="319" y="105" width="1" height="1" fill="#c8c8c8"/>
<rect x="320" y="105" width="1" height="1" fill="#c8c8c8"/>
<rect x="321" y="105" width="1" height="1" fill="#c8c8c8"/>
<rect x="322" y="106" width="1" height="1" fill="#c8c8c8"/>
<rect x="323" y="105" width="1" height="1" fill="#c8c8c8"/>
<rect x="324" y="106" width="1" height="1" fill="#c8c8c8"/>
<rect x="325" y="105" width="1" height="1" fill="#c8c8c8"/>
<rect x="326" y="105" width="1" height="1" fill="#c8c8c8"/>
<rect x="327" y="106" width="1" height="1" fill="#c8c8c8"/>
<rect x="328" y="105" width="1" height="1" fill="#c8c8c8"/>
<rect x="329" y="105" width="1" height="1" fill="#c8c8c8"/>
<rect x="330" y="105" width="1" height="1" fill="#c8c8c8"/>
<rect x="331" y="106" width="1" height="1" fill="#c8c8c8"/>
<rect x="332" y="106" width="1" height="1" fill="#c8c8c8"/>
<rect x="333" y="104" width="1" height="2" fill="#c8c8c8"/>
<rect x="334" y="105" width="1" height="1" fill="#c8c8c8"/>
<rect x="335" y="104" width="1" height="1" fill="#c8c8c8"/>
<rect x="336" y="105" width="1" height="1" fill="#c8c8c8"/>
<rect x="337" y="105" width="1" height="1" fill="#c8c8c8"/>
<rect x="338" y="105" width="1" height="1" fill="#c8c8c8"/>
<rect x="339" y="105" width="1" height="1" fill="#c8c8c8"/>
<rect x="340" y="105" width="1" height="1" fill="#c8c8c8"/>
<rect x="341" y="105" width="1" height="1" fill="#c8c8c8"/>
<rect x="342" y="105" width="1" height="1" fill="#c8c8c8"/>
<rect x="343" y="106" width="1" height="2" fill="#c8c8c8"/>
<rect x="344" y="105" width="1" height="2" fill="#c8c8c8"/>
<rect x="345" y="105" width="1" height="1" fill="#c8c8c8"/>
<rect x="346" y="105" width="1" height="1" fill="#c8c8c8"/>
<rect x="347" y="106" width="1" height="1" fill="#c8c8c8"/>
<rect x="348" y="105" width="1" height="1" fill="#c8c8c8"/>
<rect x="349" y="106" width="1" height="1" fill="#c8c8c8"/>
<rect x="350" y="105" width="1" height="1" fill="#c8c8c8"/>
<rect x="351" y="105" width="1" height="1" fill="#c8c8c8"/>
<rect x="352" y="105" width="1" height="1" fill="#c8c8c8"/>
<rect x="353" y="105" width="1" height="1" fill="#c8c8c8"/>
<rect x="354" y="105" width="1" height="1" fill="#c8c8c8"/>
<rect x="355" y="105" width="1" height="1" fill="#c8c8c8"/>
<rect x="356" y="105" width="1" height="1" fill="#c8c8c8"/>
<rect x="357" y="105" width="1" height="1" fill="#c8c8c8"/>
<rect x="358" y="104" width="1" height="1" fill="#c8c8c8"/>
<rect x="359" y="105" width="1" height="2" fill="#c8c8c8"/>
<rect x="360" y="104" width="1" height="2" fill="#c8c8c8"/>
<rect x="361" y="105" width="1" height="1" fill="#c8c8c8"/>
<rect x="362" y="105" width="1" height="1" fill="#c8c8c8"/>
<rect x="363" y="104" width="1" height="1" fill="#c8c8c8"/>
<rect x="364" y="105" width="1" height="2" fill="#c8c8c8"/>
<rect x="365" y="105" width="1" height="1" fill="#c8c8c8"/>
<rect x="366" y="105" width="1" height="1" fill="#c8c8c8"/>
<rect x="367" y="105" width="1" height="1" fill="#c8c8c8"/>
<rect x="368" y="105" width="1" height="1" fill="#c8c8c8"/>
<rect x="369" y="105" width="1" height="1" fill="#c8c8c8"/>
<rect x="370" y="105" width="1" height="1" fill="#c8c8c8"/>
<rect x="371" y="105" width="1" height="1" fill="#c8c8c8"/>
<rect x="372" y="105" width="1" height="1" fill="#c8c8c8"/>
<rect x="373" y="106" width="1" height="1" fill="#c8c8c8"/>
<rect x="374" y="105" width="1" height="1" fill="#c8c8c8"/>
<rect x="375" y="106" width="1" height="1" fill="#c8c8c8"/>
<rect x="376" y="105" width="1" height="1" fill="#c8c8c8"/>
<rect x="377" y="105" width="1" height="1" fill="#c8c8c8"/>
<rect x="378" y="106" width="1" height="2" fill="#c8c8c8"/>
<rect x="379" y="105" width="1" height="2" fill="#c8c8c8"/>
<rect x="380" y="105" width="1" height="1" fill="#c8c8c8"/>
<rect x="381" y="105" width="1" height="1" fill="#c8c8c8"/>
<rect x="382" y="105" width="1" height="1" fill="#c8c8c8"/>
<rect x="383" y="106" width="1" height="2" fill="#c8c8c8"/>
<rect x="384" y="105" width="1" height="2" fill="#c8c8c8"/>
<rect x="385" y="104" width="1" height="1" fill="#c8c8c8"/>
<rect x="386" y="105" width="1" height="1" fill="#c8c8c8"/>
<rect x="387" y="105" width="1" height="1" fill="#c8c8c8"/>
<rect x="388" y="105" width="1" height="1" fill="#c8c8c8"/>
<rect x="389" y="105" width="1" height="1" fill="#c8c8c8"/>
<rect x="390" y="105" width="1" height="1" fill="#c8c8c8"/>
<rect x="391" y="105" width="1" height="1" fill="#c8c8c8"/>
<rect x="392" y="105" width="1" height="1" fill="#c8c8c8"/>
<rect x="393" y="105" width="1" height="1" fill="#c8c8c8"/>
<rect x="394" y="105" width="1" height="1" fill="#c8c8c8"/>
<rect x="395" y="105" width="1" height="1" fill="#c8c8c8"/>
<rect x="396" y="105" width="1" height="1" fill="#c8c8c8"/>
<rect x="397" y="105" width="1" height="1" fill="#c8c8c8"/>
<rect x="398" y="104" width="1" height="1" fill="#c8c8c8"/>
<rect x="399" y="105" width="1" height="1" fill="#c8c8c8"/>
<rect x="400" y="105" width="1" height="1" fill="#c8c8c8"/>
<rect x="401" y="105" width="1" height="1" fill="#c8c8c8"/>
<rect x="402" y="105" width="1" height="1" fill="#c8c8c8"/>
<rect x="403" y="105" width="1" height="1" fill="#c8c8c8"/>
<rect x="404" y="105" width="1" height="1" fill="#c8c8c8"/>
<rect x="405" y="106" width="1" height="1" fill="#c8c8c8"/>
<rect x="406" y="105" width="1" height="1" fill="#c8c8c8"/>
<rect x="407" y="105" width="1" height="1" fill="#c8c8c8"/>
<rect x="408" y="105" width="1" height="1" fill="#c8c8c8"/>
<rect x="409" y="105" width="1" height="1" fill="#c8c8c8"/>
<rect x="410" y="105" width="1" height="1" fill="#c8c8c8"/>
<rect x="411" y="105" width="1" height="1" fill="#c8c8c8"/>
<rect x="412" y="105" width="1" height="1" fill="#c8c8c8"/>
<rect x="413" y="105" width="1" height="1" fill="#c8c8c8"/>
<rect x="414" y="105" width="1" height="1" fill="#c8c8c8"/>
<rect x="415" y="105" width="1" height="1" fill="#c8c8c8"/>
<rect x="416" y="105" width="1" height="1" fill="#c8c8c8"/>
<rect x="417" y="105" width="1" height="1" fill="#c8c8c8"/>
<rect x="418" y="105" width="1" height="1" fill="#c8c8c8"/>
<rect x="419" y="105" width="1" height="1" fill="#c8c8c8"/>
<rect x="420" y="105" width="1" height="1" fill="#c8c8c8"/>
<rect x="421" y="105" width="1" height="1" fill="#c8c8c8"/>
<rect x="422" y="105" width="1" height="1" fill="#c8c8c8"/>
<rect x="423" y="105" width="1" height="1" fill="#c8c8c8"/>
<rect x="424" y="105" width="1" height="1" fill="#c8c8c8"/>
<rect x="425" y="106" width="1" height="1" fill="#c8c8c8"/>
<rect x="426" y="105" width="1" height="1" fill="#c8c8c8"/>
<rect x="427" y="105" width="1" height="1" fill="#c8c8c8"/>
<rect x="428" y="105" width="1" height="1" fill="#c8c8c8"/>
<rect x="429" y="105" width="1" height="1" fill="#c8c8c8"/>
<rect x="430" y="105" width="1" height="1" fill="#c8c8c8"/>
<rect x="431" y="105" width="1" height="1" fill="#c8c8c8"/>
<rect x="432" y="105" width="1" height="1" fill="#c8c8c8"/>
<rect x="433" y="105" width="1" height="1" fill="#c8c8c8"/>
<rect x="434" y="105" width="1" height="1" fill="#c8c8c8"/>
<rect x="435" y="105" width="1" height="1" fill="#c8c8c8"/>
<rect x="436" y="105" width="1" height="1" fill="#c8c8c8"/>
<rect x="437" y="105" width="1" height="1" fill="#c8c8c8"/>
<rect x="438" y="105" width="1" height="1" fill="#c8c8c8"/>
<rect x="439" y="105" width="1" height="1" fill="#c8c8c8"/>
<rect x="440" y="105" width="1" height="1" fill="#c8c8c8"/>
<rect x="441" y="105" width="1" height="1" fill="#c8c8c8"/>
<rect x="442" y="105" width="1" height="1" fill="#c8c8c8"/>
<rect x="443" y="105" width="1" height="1" fill="#c8c8c8"/>
<rect x="444" y="105" width="1" height="1" fill="#c8c8c8"/>
<rect x="445" y="104" width="1" height="1" fill="#c8c8c8"/>
<rect x="446" y="105" width="1" height="1" fill="#c8c8c8"/>
<rect x="447" y="105" width="1" height="1" fill="#c8c8c8"/>
<rect x="448" y="104" width="1" height="1" fill="#c8c8c8"/>
<rect x="449" y="103" width="1" height="1" fill="#c8c8c8"/>
<rect x="450" y="102" width="1" height="1" fill="#c8c8c8"/>
<rect x="451" y="103" width="1" height="1" fill="#c8c8c8"/>
<rect x="452" y="104" width="1" height="1" fill="#c8c8c8"/>
<rect x="453" y="105" width="1" height="1" fill="#c8c8c8"/>
<rect x="454" y="105" width="1" height="1" fill="#c8c8c8"/>
<rect x="455" y="105" width="1" height="1" fill="#c8c8c8"/>
<rect x="456" y="105" width="1" height="1" fill="#c8c8c8"/>
<rect x="457" y="105" width="1" height="1" fill="#c8c8c8"/>
<rect x="458" y="105" width="1" height="1" fill="#c8c8c8"/>
<rect x="459" y="105" width="1" height="1" fill="#c8c8c8"/>
<rect x="460" y="105" width="1" height="1" fill="#c8c8c8"/>
<rect x="461" y="106" width="1" height="1" fill="#c8c8c8"/>
<rect x="462" y="104" width="1" height="2" fill="#c8c8c8"/>
<rect x="463" y="105" width="1" height="1" fill="#c8c8c8"/>
<rect x="464" y="105" width="1" height="1" fill="#c8c8c8"/>
<rect x="465" y="104" width="1" height="1" fill="#c8c8c8"/>
<rect x="466" y="105" width="1" height="1" fill="#c8c8c8"/>
<rect x="467" y="105" width="1" height="1" fill="#c8c8c8"/>
<rect x="468" y="106" width="1" height="1" fill="#c8c8c8"/>
<rect x="469" y="105" width="1" height="1" fill="#c8c8c8"/>
<rect x="470" y="105" width="1" height="1" fill="#c8c8c8"/>
<rect x="471" y="106" width="1" height="1" fill="#c8c8c8"/>
<rect x="472" y="107" width="1" height="1" fill="#c8c8c8"/>
<rect x="473" y="105" width="1" height="2" fill="#c8c8c8"/>
<rect x="474" y="104" width="1" height="1" fill="#c8c8c8"/>
<rect x="475" y="104" width="1" height="1" fill="#c8c8c8"/>
<rect x="476" y="105" width="1" height="2" fill="#c8c8c8"/>
<rect x="477" y="105" width="1" height="1" fill="#c8c8c8"/>
<rect x="478" y="105" width="1" height="1" fill="#c8c8c8"/>
<rect x="479" y="105" width="1" height="1" fill="#c8c8c8"/>
<rect x="480" y="105" width="1" height="1" fill="#c8c8c8"/>
<rect x="481" y="105" width="1" height="1" fill="#c8c8c8"/>
<rect x="482" y="105" width="1" height="1" fill="#c8c8c8"/>
<rect x="483" y="106" width="1" height="1" fill="#c8c8c8"/>
<rect x="484" y="105" width="1" height="1" fill="#c8c8c8"/>
<rect x="485" y="105" width="1" height="1" fill="#c8c8c8"/>
<rect x="486" y="105" width="1" height="1" fill="#c8c8c8"/>
<rect x="487" y="106" width="1" height="2" fill="#c8c8c8"/>
<rect x="488" y="105" width="1" height="2" fill="#c8c8c8"/>
<rect x="489" y="105" width="1" height="1" fill="#c8c8c8"/>
<rect x="490" y="106" width="1" height="1" fill="#c8c8c8"/>
<rect x="491" y="105" width="1" height="1" fill="#c8c8c8"/>
<rect x="492" y="106" width="1" height="1" fill="#c8c8c8"/>
<rect x="493" y="105" width="1" height="1" fill="#c8c8c8"/>
<rect x="494" y="105" width="1" height="1" fill="#c8c8c8"/>
<rect x="495" y="105" width="1" height="1" fill="#c8c8c8"/>
<rect x="496" y="105" width="1" height="1" fill="#c8c8c8"/>
<rect x="497" y="105" width="1" height="1" fill="#c8c8c8"/>
<rect x="498" y="105" width="1" height="1" fill="#c8c8c8"/>
<rect x="499" y="105" width="1" height="1" fill="#c8c8c8"/>
<rect x="500" y="105" width="1" height="1" fill="#c8c8c8"/>
<rect x="501" y="105" width="1" height="1" fill="#c8c8c8"/>
<rect x="502" y="104" width="1" height="1" fill="#c8c8c8"/>
<rect x="503" y="105" width="1" height="1" fill="#c8c8c8"/>
<rect x="504" y="105" width="1" height="1" fill="#c8c8c8"/>
<rect x="505" y="105" width="1" height="1" fill="#c8c8c8"/>
<rect x="506" y="105" width="1" height="1" fill="#c8c8c8"/>
<rect x="507" y="105" width="1" height="1" fill="#c8c8c8"/>
<rect x="508" y="105" width="1" height="1" fill="#c8c8c8"/>
<rect x="509" y="105" width="1" height="1" fill="#c8c8c8"/>
<rect x="510" y="106" width="1" height="1" fill="#c8c8c8"/>
<rect x="511" y="107" width="1" height="1" fill="#c8c8c8"/>
<rect x="512" y="105" width="1" height="2" fill="#c8c8c8"/>
<rect x="516" y="73" width="1" height="132" fill="#c8c8c8"/>
<rect x="61" y="223" width="470" height="132" fill="#007c00"/>
<rect x="72" y="223" width="1" height="132" fill="#000088"/>
<rect x="82" y="223" width="1" height="132" fill="#000088"/>
<rect x="93" y="223" width="1" height="132" fill="#000088"/>
<rect x="103" y="223" width="1" height="132" fill="#000088"/>
<rect x="113" y="223" width="1" height="132" fill="#0000ff"/>
<rect x="124" y="223" width="1" height="132" fill="#000088"/>
<rect x="134" y="223" width="1" height="132" fill="#000088"/>
<rect x="145" y="223" width="1" height="132" fill="#000088"/>
<rect x="155" y="223" width="1" height="132" fill="#000088"/>
<rect x="165" y="223" width="1" height="132" fill="#0000ff"/>
<rect x="176" y="223" width="1" height="132" fill="#000088"/>
<rect x="186" y="223" width="1" height="132" fill="#000088"/>
<rect x="196" y="223" width="1" height="132" fill="#000088"/>
<rect x="207" y="223" width="1" height="132" fill="#000088"/>
<rect x="217" y="223" width="1" height="132" fill="#0000ff"/>
<rect x="228" y="223" width="1" height="132" fill="#000088"/>
<rect x="238" y="223" width="1" height="132" fill="#000088"/>
<rect x="248" y="223" width="1" height="132" fill="#000088"/>
<rect x="259" y="223" width="1" height="132" fill="#000088"/>
<rect x="269" y="223" width="1" height="132" fill="#0000ff"/>
<rect x="279" y="223" width="1" height="132" fill="#000088"/>
<rect x="290" y="223" width="1" height="132" fill="#000088"/>
<rect x="300" y="223" width="1" height="132" fill="#000088"/>
<rect x="311" y="223" width="1" height="132" fill="#000088"/>
<rect x="321" y="223" width="1" height="132" fill="#0000ff"/>
<rect x="331" y="223" width="1" height="132" fill="#000088"/>
<rect x="342" y="223" width="1" height="132" fill="#000088"/>
<rect x="352" y="223" width="1" height="132" fill="#000088"/>
<rect x="362" y="223" width="1" height="132" fill="#000088"/>
<rect x="373" y="223" width="1" height="132" fill="#0000ff"/>
<rect x="383" y="223" width="1" height="132" fill="#000088"/>
<rect x="394" y="223" width="1" height="132" fill="#000088"/>
<rect x="404" y="223" width="1" height="132" fill="#000088"/>
<rect x="414" y="223" width="1" height="132" fill="#000088"/>
<rect x="425" y="223" width="1" height="132" fill="#0000ff"/>
<rect x="435" y="223" width="1" height="132" fill="#000088"/>
<rect x="445" y="223" width="1" height="132" fill="#000088"/>
<rect x="456" y="223" width="1" height="132" fill="#000088"/>
<rect x="466" y="223" width="1" height="132" fill="#000088"/>
<rect x="477" y="223" width="1" height="132" fill="#0000ff"/>
<rect x="487" y="223" width="1" height="132" fill="#000088"/>
<rect x="497" y="223" width="1" height="132" fill="#000088"/>
<rect x="508" y="223" width="1" height="132" fill="#000088"/>
<rect x="518" y="223" width="1" height="132" fill="#000088"/>
<rect x="59" y="354" width="470" height="1" fill="#0000ff"/>
<rect x="60" y="341" width="469" height="1" fill="#000088"/>
<rect x="59" y="328" width="470" height="1" fill="#0000ff"/>
<rect x="60" y="315" width="469" height="1" fill="#000088"/>
<rect x="59" y="302" width="470" height="1" fill="#0000ff"/>
<rect x="60" y="289" width="469" height="1" fill="#000088"/>
<rect x="59" y="276" width="470" height="1" fill="#0000ff"/>
<rect x="60" y="263" width="469" height="1" fill="#000088"/>
<rect x="59" y="250" width="470" height="1" fill="#0000ff"/>
<rect x="60" y="237" width="469" height="1" fill="#000088"/>
<rect x="59" y="223" width="470" height="1" fill="#0000ff"/>
<rect x="81" y="341" width="1" height="13" fill="#ffff00"/>
<rect x="100" y="341" width="1" height="13" fill="#ffff00"/>
<rect x="213" y="315" width="1" height="39" fill="#ffff00"/>
<rect x="243" y="315" width="1" height="39" fill="#ffff00"/>
<rect x="245" y="328" width="1" height="26" fill="#ffff00"/>
<rect x="262" y="341" width="1" height="13" fill="#ffff00"/>
<rect x="264" y="341" width="1" height="13" fill="#ffff00"/>
<rect x="304" y="341" width="1" height="13" fill="#ffff00"/>
<rect x="311" y="328" width="1" height="26" fill="#ffff00"/>
<rect x="349" y="328" width="1" height="26" fill="#ffff00"/>
<rect x="350" y="328" width="1" height="26" fill="#ffff00"/>
<rect x="365" y="315" width="1" height="39" fill="#ffff00"/>
<rect x="379" y="341" width="1" height="13" fill="#ffff00"/>
<rect x="486" y="341" width="1" height="13" fill="#ffff00"/>
<rect x="496" y="341" width="1" height="13" fill="#ffff00"/>
<rect x="62" y="290" width="1" height="5" fill="#ff00ff"/>
<rect x="63" y="293" width="1" height="3" fill="#ff00ff"/>
<rect x="64" y="292" width="1" height="4" fill="#ff00ff"/>
<rect x="65" y="290" width="1" height="4" fill="#ff00ff"/>
<rect x="66" y="290" width="1" height="4" fill="#ff00ff"/>
<rect x="67" y="292" width="1" height="3" fill="#ff00ff"/>
<rect x="68" y="293" width="1" height="3" fill="#ff00ff"/>
<rect x="69" y="290" width="1" height="6" fill="#ff00ff"/>
<rect x="70" y="290" width="1" height="2" fill="#ff00ff"/>
<rect x="71" y="290" width="1" height="6" fill="#ff00ff"/>
<rect x="72" y="293" width="1" height="3" fill="#ff00ff"/>
<rect x="73" y="293" width="1" height="4" fill="#ff00ff"/>
<rect x="74" y="294" width="1" height="3" fill="#ff00ff"/>
<rect x="75" y="292" width="1" height="4" fill="#ff00ff"/>
<rect x="76" y="292" width="1" height="2" fill="#ff00ff"/>
<rect x="77" y="292" width="1" height="7" fill="#ff00ff"/>
<rect x="78" y="292" width="1" height="7" fill="#ff00ff"/>
<rect x="79" y="291" width="1" height="3" fill="#ff00ff"/>
<rect x="80" y="291" width="1" height="2" fill="#ff00ff"/>
<rect x="81" y="291" width="1" height="4" fill="#ff00ff"/>
<rect x="82" y="293" width="1" height="2" fill="#ff00ff"/>
<rect x="83" y="292" width="1" height="3" fill="#ff00ff"/>
<rect x="84" y="292" width="1" height="2" fill="#ff00ff"/>
<rect x="85" y="292" width="1" height="3" fill="#ff00ff"/>
<rect x="86" y="293" width="1" height="3" fill="#ff00ff"/>
<rect x="87" y="294" width="1" height="2" fill="#ff00ff"/>
<rect x="88" y="293" width="1" height="3" fill="#ff00ff"/>
<rect x="89" y="289" width="1" height="6" fill="#ff00ff"/>
<rect x="90" y="289" width="1" height="7" fill="#ff00ff"/>
<rect x="91" y="290" width="1" height="6" fill="#ff00ff"/>
<rect x="92" y="290" width="1" height="4" fill="#ff00ff"/>
<rect x="93" y="290" width="1" height="4" fill="#ff00ff"/>
<rect x="94" y="290" width="1" height="5" fill="#ff00ff"/>
<rect x="95" y="291" width="1" height="4" fill="#ff00ff"/>
<rect x="96" y="291" width="1" height="4" fill="#ff00ff"/>
<rect x="97" y="293" width="1" height="7" fill="#ff00ff"/>
<rect x="98" y="292" width="1" height="8" fill="#ff00ff"/>
<rect x="99" y="292" width="1" height="4" fill="#ff00ff"/>
<rect x="100" y="290" width="1" height="6" fill="#ff00ff"/>
<rect x="101" y="290" width="1" height="3" fill="#ff00ff"/>
<rect x="102" y="291" width="1" height="3" fill="#ff00ff"/>
<rect x="103" y="291" width="1" height="3" fill="#ff00ff"/>
<rect x="104" y="291" width="1" height="2" fill="#ff00ff"/>
<rect x="105" y="290" width="1" height="3" fill="#ff00ff"/>
<rect x="106" y="288" width="1" height="4" fill="#ff00ff"/>
<rect x="107" y="288" width="1" height="4" fill="#ff00ff"/>
<rect x="108" y="287" width="1" height="5" fill="#ff00ff"/>
<rect x="109" y="287" width="1" height="7" fill="#ff00ff"/>
<rect x="110" y="287" width="1" height="7" fill="#ff00ff"/>
<rect x="111" y="287" width="1" height="4" fill="#ff00ff"/>
<rect x="112" y="287" width="1" height="4" fill="#ff00ff"/>
<rect x="113" y="287" width="1" height="4" fill="#ff00ff"/>
<rect x="114" y="286" width="1" height="5" fill="#ff00ff"/>
<rect x="115" y="286" width="1" height="5" fill="#ff00ff"/>
<rect x="116" y="287" width="1" height="4" fill="#ff00ff"/>
<rect x="117" y="287" width="1" height="5" fill="#ff00ff"/>
<rect x="118" y="289" width="1" height="3" fill="#ff00ff"/>
<rect x="119" y="288" width="1" height="3" fill="#ff00ff"/>
<rect x="120" y="286" width="1" height="4" fill="#ff00ff"/>
<rect x="121" y="286" width="1" height="5" fill="#ff00ff"/>
<rect x="122" y="288" width="1" height="3" fill="#ff00ff"/>
<rect x="123" y="288" width="1" height="4" fill="#ff00ff"/>
<rect x="124" y="287" width="1" height="5" fill="#ff00ff"/>
<rect x="125" y="287" width="1" height="3" fill="#ff00ff"/>
<rect x="126" y="288" width="1" height="2" fill="#ff00ff"/>
<rect x="127" y="288" width="1" height="2" fill="#ff00ff"/>
<rect x="128" y="288" width="1" height="2" fill="#ff00ff"/>
<rect x="129" y="288" width="1" height="2" fill="#ff00ff"/>
<rect x="130" y="286" width="1" height="4" fill="#ff00ff"/>
<rect x="131" y="286" width="1" height="2" fill="#ff00ff"/>
<rect x="132" y="286" width="1" height="3" fill="#ff00ff"/>
<rect x="133" y="287" width="1" height="3" fill="#ff00ff"/>
<rect x="134" y="288" width="1" height="4" fill="#ff00ff"/>
<rect x="135" y="289" width="1" height="3" fill="#ff00ff"/>
<rect x="136" y="289" width="1" height="2" fill="#ff00ff"/>
<rect x="137" y="289" width="1" height="2" fill="#ff00ff"/>
<rect x="138" y="289" width="1" height="2" fill="#ff00ff"/>
<rect x="139" y="288" width="1" height="3" fill="#ff00ff"/>
<rect x="140" y="288" width="1" height="3" fill="#ff00ff"/>
<rect x="141" y="289" width="1" height="3" fill="#ff00ff"/>
<rect x="142" y="287" width="1" height="5" fill="#ff00ff"/>
<rect x="143" y="286" width="1" height="3" fill="#ff00ff"/>
<rect x="144" y="286" width="1" height="7" fill="#ff00ff"/>
<rect x="145" y="288" width="1" height="5" fill="#ff00ff"/>
<rect x="146" y="288" width="1" height="3" fill="#ff00ff"/>
<rect x="147" y="289" width="1" height="2" fill="#ff00ff"/>
<rect x="148" y="285" width="1" height="6" fill="#ff00ff"/>
<rect x="149" y="285" width="1" height="8" fill="#ff00ff"/>
<rect x="150" y="278" width="1" height="15" fill="#ff00ff"/>
<rect x="151" y="278" width="1" height="12" fill="#ff00ff"/>
<rect x="152" y="288" width="1" height="3" fill="#ff00ff"/>
<rect x="153" y="288" width="1" height="3" fill="#ff00ff"/>
<rect x="154" y="286" width="1" height="4" fill="#ff00ff"/>
<rect x="155" y="286" width="1" height="3" fill="#ff00ff"/>
<rect x="156" y="287" width="1" height="3" fill="#ff00ff"/>
<rect x="157" y="288" width="1" height="3" fill="#ff00ff"/>
<rect x="158" y="288" width="1" height="3" fill="#ff00ff"/>
<rect x="159" y="287" width="1" height="3" fill="#ff00ff"/>
<rect x="160" y="287" width="1" height="5" fill="#ff00ff"/>
<rect x="161" y="286" width="1" height="6" fill="#ff00ff"/>
<rect x="162" y="286" width="1" height="5" fill="#ff00ff"/>
<rect x="163" y="289" width="1" height="2" fill="#ff00ff"/>
<rect x="164" y="287" width="1" height="4" fill="#ff00ff"/>
<rect x="165" y="284" width="1" height="5" fill="#ff00ff"/>
<rect x="166" y="284" width="1" height="4" fill="#ff00ff"/>
<rect x="167" y="286" width="1" height="4" fill="#ff00ff"/>
<rect x="168" y="288" width="1" height="2" fill="#ff00ff"/>
<rect x="169" y="288" width="1" height="4" fill="#ff00ff"/>
<rect x="170" y="285" width="1" height="7" fill="#ff00ff"/>
<rect x="171" y="285" width="1" height="4" fill="#ff00ff"/>
<rect x="172" y="287" width="1" height="3" fill="#ff00ff"/>
<rect x="173" y="287" width="1" height="3" fill="#ff00ff"/>
<rect x="174" y="283" width="1" height="6" fill="#ff00ff"/>
<rect x="175" y="283" width="1" height="8" fill="#ff00ff"/>
<rect x="176" y="289" width="1" height="4" fill="#ff00ff"/>
<rect x="177" y="289" width="1" height="4" fill="#ff00ff"/>
<rect x="178" y="286" width="1" height="5" fill="#ff00ff"/>
<rect x="179" y="286" width="1" height="2" fill="#ff00ff"/>
<rect x="180" y="286" width="1" height="4" fill="#ff00ff"/>
<rect x="181" y="288" width="1" height="5" fill="#ff00ff"/>
<rect x="182" y="288" width="1" height="5" fill="#ff00ff"/>
<rect x="183" y="287" width="1" height="3" fill="#ff00ff"/>
<rect x="184" y="287" width="1" height="5" fill="#ff00ff"/>
<rect x="185" y="287" width="1" height="5" fill="#ff00ff"/>
<rect x="186" y="287" width="1" height="5" fill="#ff00ff"/>
<rect x="187" y="286" width="1" height="6" fill="#ff00ff"/>
<rect x="188" y="286" width="1" height="2" fill="#ff00ff"/>
<rect x="189" y="286" width="1" height="4" fill="#ff00ff"/>
<rect x="190" y="288" width="1" height="4" fill="#ff00ff"/>
<rect x="191" y="288" width="1" height="4" fill="#ff00ff"/>
<rect x="192" y="288" width="1" height="2" fill="#ff00ff"/>
<rect x="193" y="284" width="1" height="6" fill="#ff00ff"/>
<rect x="194" y="284" width="1" height="4" fill="#ff00ff"/>
<rect x="195" y="286" width="1" height="2" fill="#ff00ff"/>
<rect x="196" y="286" width="1" height="2" fill="#ff00ff"/>
<rect x="197" y="286" width="1" height="4" fill="#ff00ff"/>
<rect x="198" y="286" width="1" height="4" fill="#ff00ff"/>
<rect x="199" y="286" width="1" height="4" fill="#ff00ff"/>
<rect x="200" y="287" width="1" height="3" fill="#ff00ff"/>
<rect x="201" y="286" width="1" height="3" fill="#ff00ff"/>
<rect x="202" y="286" width="1" height="3" fill="#ff00ff"/>
<rect x="203" y="287" width="1" height="3" fill="#ff00ff"/>
<rect x="204" y="288" width="1" height="2" fill="#ff00ff"/>
<rect x="205" y="286" width="1" height="4" fill="#ff00ff"/>
<rect x="206" y="286" width="1" height="3" fill="#ff00ff"/>
<rect x="207" y="285" width="1" height="4" fill="#ff00ff"/>
<rect x="208" y="285" width="1" height="7" fill="#ff00ff"/>
<rect x="209" y="289" width="1" height="3" fill="#ff00ff"/>
<rect x="210" y="287" width="1" height="4" fill="#ff00ff"/>
<rect x="211" y="286" width="1" height="3" fill="#ff00ff"/>
<rect x="212" y="285" width="1" height="3" fill="#ff00ff"/>
<rect x="213" y="285" width="1" height="4" fill="#ff00ff"/>
<rect x="214" y="287" width="1" height="2" fill="#ff00ff"/>
<rect x="215" y="287" width="1" height="6" fill="#ff00ff"/>
<rect x="216" y="287" width="1" height="6" fill="#ff00ff"/>
<rect x="217" y="286" width="1" height="3" fill="#ff00ff"/>
<rect x="218" y="283" width="1" height="5" fill="#ff00ff"/>
<rect x="219" y="283" width="1" height="8" fill="#ff00ff"/>
<rect x="220" y="287" width="1" height="4" fill="#ff00ff"/>
<rect x="221" y="284" width="1" height="5" fill="#ff00ff"/>
<rect x="222" y="284" width="1" height="5" fill="#ff00ff"/>
<rect x="223" y="284" width="1" height="5" fill="#ff00ff"/>
<rect x="224" y="284" width="1" height="11" fill="#ff00ff"/>
<rect x="225" y="289" width="1" height="6" fill="#ff00ff"/>
<rect x="226" y="288" width="1" height="3" fill="#ff00ff"/>
<rect x="227" y="287" width="1" height="3" fill="#ff00ff"/>
<rect x="228" y="283" width="1" height="6" fill="#ff00ff"/>
<rect x="229" y="283" width="1" height="6" fill="#ff00ff"/>
<rect x="230" y="284" width="1" height="5" fill="#ff00ff"/>
<rect x="231" y="284" width="1" height="6" fill="#ff00ff"/>
<rect x="232" y="283" width="1" height="7" fill="#ff00ff"/>
<rect x="233" y="283" width="1" height="4" fill="#ff00ff"/>
<rect x="234" y="285" width="1" height="6" fill="#ff00ff"/>
<rect x="235" y="289" width="1" height="3" fill="#ff00ff"/>
<rect x="236" y="285" width="1" height="7" fill="#ff00ff"/>
<rect x="237" y="284" width="1" height="3" fill="#ff00ff"/>
<rect x="238" y="284" width="1" height="6" fill="#ff00ff"/>
<rect x="239" y="288" width="1" height="2" fill="#ff00ff"/>
<rect x="240" y="285" width="1" height="5" fill="#ff00ff"/>
<rect x="241" y="285" width="1" height="3" fill="#ff00ff"/>
<rect x="242" y="286" width="1" height="2" fill="#ff00ff"/>
<rect x="243" y="285" width="1" height="3" fill="#ff00ff"/>
<rect x="244" y="285" width="1" height="3" fill="#ff00ff"/>
<rect x="245" y="286" width="1" height="5" fill="#ff00ff"/>
<rect x="246" y="288" width="1" height="3" fill="#ff00ff"/>
<rect x="247" y="288" width="1" height="4" fill="#ff00ff"/>
<rect x="248" y="287" width="1" height="5" fill="#ff00ff"/>
<rect x="249" y="287" width="1" height="2" fill="#ff00ff"/>
<rect x="250" y="285" width="1" height="4" fill="#ff00ff"/>
<rect x="251" y="285" width="1" height="4" fill="#ff00ff"/>
<rect x="252" y="285" width="1" height="4" fill="#ff00ff"/>
<rect x="253" y="284" width="1" height="3" fill="#ff00ff"/>
<rect x="254" y="284" width="1" height="6" fill="#ff00ff"/>
<rect x="255" y="288" width="1" height="3" fill="#ff00ff"/>
<rect x="256" y="288" width="1" height="3" fill="#ff00ff"/>
<rect x="257" y="288" width="1" height="3" fill="#ff00ff"/>
<rect x="258" y="287" width="1" height="4" fill="#ff00ff"/>
<rect x="259" y="286" width="1" height="3" fill="#ff00ff"/>
<rect x="260" y="286" width="1" height="3" fill="#ff00ff"/>
<rect x="261" y="286" width="1" height="3" fill="#ff00ff"/>
<rect x="262" y="285" width="1" height="3" fill="#ff00ff"/>
<rect x="263" y="284" width="1" height="3" fill="#ff00ff"/>
<rect x="264" y="284" width="1" height="2" fill="#ff00ff"/>
<rect x="265" y="284" width="1" height="5" fill="#ff00ff"/>
<rect x="266" y="287" width="1" height="2" fill="#ff00ff"/>
<rect x="267" y="286" width="1" height="3" fill="#ff00ff"/>
<rect x="268" y="286" width="1" height="5" fill="#ff00ff"/>
<rect x="269" y="287" width="1" height="4" fill="#ff00ff"/>
<rect x="270" y="287" width="1" height="3" fill="#ff00ff"/>
<rect x="271" y="288" width="1" height="3" fill="#ff00ff"/>
<rect x="272" y="285" width="1" height="6" fill="#ff00ff"/>
<rect x="273" y="283" width="1" height="4" fill="#ff00ff"/>
<rect x="274" y="283" width="1" height="7" fill="#ff00ff"/>
<rect x="275" y="286" width="1" height="4" fill="#ff00ff"/>
<rect x="276" y="286" width="1" height="5" fill="#ff00ff"/>
<rect x="277" y="287" width="1" height="4" fill="#ff00ff"/>
<rect x="278" y="287" width="1" height="3" fill="#ff00ff"/>
<rect x="279" y="288" width="1" height="2" fill="#ff00ff"/>
<rect x="280" y="283" width="1" height="7" fill="#ff00ff"/>
<rect x="281" y="283" width="1" height="7" fill="#ff00ff"/>
<rect x="282" y="286" width="1" height="4" fill="#ff00ff"/>
<rect x="283" y="285" width="1" height="3" fill="#ff00ff"/>
<rect x="284" y="285" width="1" height="3" fill="#ff00ff"/>
<rect x="285" y="286" width="1" height="4" fill="#ff00ff"/>
<rect x="286" y="288" width="1" height="2" fill="#ff00ff"/>
<rect x="287" y="288" width="1" height="2" fill="#ff00ff"/>
<rect x="288" y="284" width="1" height="6" fill="#ff00ff"/>
<rect x="289" y="284" width="1" height="4" fill="#ff00ff"/>
<rect x="290" y="283" width="1" height="5" fill="#ff00ff"/>
<rect x="291" y="283" width="1" height="5" fill="#ff00ff"/>
<rect x="292" y="286" width="1" height="4" fill="#ff00ff"/>
<rect x="293" y="285" width="1" height="5" fill="#ff00ff"/>
<rect x="294" y="285" width="1" height="4" fill="#ff00ff"/>
<rect x="295" y="287" width="1" height="2" fill="#ff00ff"/>
<rect x="296" y="287" width="1" height="3" fill="#ff00ff"/>
<rect x="297" y="285" width="1" height="5" fill="#ff00ff"/>
<rect x="298" y="285" width="1" height="2" fill="#ff00ff"/>
<rect x="299" y="285" width="1" height="2" fill="#ff00ff"/>
<rect x="300" y="285" width="1" height="7" fill="#ff00ff"/>
<rect x="301" y="288" width="1" height="4" fill="#ff00ff"/>
<rect x="302" y="286" width="1" height="4" fill="#ff00ff"/>
<rect x="303" y="286" width="1" height="3" fill="#ff00ff"/>
<rect x="304" y="287" width="1" height="2" fill="#ff00ff"/>
<rect x="305" y="287" width="1" height="2" fill="#ff00ff"/>
<rect x="306" y="286" width="1" height="3" fill="#ff00ff"/>
<rect x="307" y="286" width="1" height="2" fill="#ff00ff"/>
<rect x="308" y="284" width="1" height="4" fill="#ff00ff"/>
<rect x="309" y="284" width="1" height="3" fill="#ff00ff"/>
<rect x="310" y="285" width="1" height="6" fill="#ff00ff"/>
<rect x="311" y="287" width="1" height="4" fill="#ff00ff"/>
<rect x="312" y="287" width="1" height="2" fill="#ff00ff"/>
<rect x="313" y="286" width="1" height="3" fill="#ff00ff"/>
<rect x="314" y="286" width="1" height="3" fill="#ff00ff"/>
<rect x="315" y="287" width="1" height="2" fill="#ff00ff"/>
<rect x="316" y="285" width="1" height="4" fill="#ff00ff"/>
<rect x="317" y="285" width="1" height="4" fill="#ff00ff"/>
<rect x="318" y="287" width="1" height="2" fill="#ff00ff"/>
<rect x="319" y="285" width="1" height="4" fill="#ff00ff"/>
<rect x="320" y="285" width="1" height="2" fill="#ff00ff"/>
<rect x="321" y="285" width="1" height="2" fill="#ff00ff"/>
<rect x="322" y="285" width="1" height="2" fill="#ff00ff"/>
<rect x="323" y="285" width="1" height="5" fill="#ff00ff"/>
<rect x="324" y="282" width="1" height="8" fill="#ff00ff"/>
<rect x="325" y="282" width="1" height="6" fill="#ff00ff"/>
<rect x="326" y="285" width="1" height="3" fill="#ff00ff"/>
<rect x="327" y="285" width="1" height="2" fill="#ff00ff"/>
<rect x="328" y="285" width="1" height="4" fill="#ff00ff"/>
<rect x="329" y="287" width="1" height="3" fill="#ff00ff"/>
<rect x="330" y="287" width="1" height="3" fill="#ff00ff"/>
<rect x="331" y="286" width="1" height="3" fill="#ff00ff"/>
<rect x="332" y="285" width="1" height="3" fill="#ff00ff"/>
<rect x="333" y="285" width="1" height="3" fill="#ff00ff"/>
<rect x="334" y="286" width="1" height="4" fill="#ff00ff"/>
<rect x="335" y="286" width="1" height="4" fill="#ff00ff"/>
<rect x="336" y="284" width="1" height="4" fill="#ff00ff"/>
<rect x="337" y="284" width="1" height="2" fill="#ff00ff"/>
<rect x="338" y="284" width="1" height="2" fill="#ff00ff"/>
<rect x="339" y="284" width="1" height="2" fill="#ff00ff"/>
<rect x="340" y="284" width="1" height="6" fill="#ff00ff"/>
<rect x="341" y="287" width="1" height="3" fill="#ff00ff"/>
<rect x="342" y="286" width="1" height="3" fill="#ff00ff"/>
<rect x="343" y="286" width="1" height="5" fill="#ff00ff"/>
<rect x="344" y="285" width="1" height="6" fill="#ff00ff"/>
<rect x="345" y="285" width="1" height="5" fill="#ff00ff"/>
<rect x="346" y="288" width="1" height="2" fill="#ff00ff"/>
<rect x="347" y="284" width="1" height="6" fill="#ff00ff"/>
<rect x="348" y="284" width="1" height="2" fill="#ff00ff"/>
<rect x="349" y="284" width="1" height="3" fill="#ff00ff"/>
<rect x="350" y="285" width="1" height="5" fill="#ff00ff"/>
<rect x="351" y="288" width="1" height="3" fill="#ff00ff"/>
<rect x="352" y="284" width="1" height="7" fill="#ff00ff"/>
<rect x="353" y="284" width="1" height="6" fill="#ff00ff"/>
<rect x="354" y="286" width="1" height="4" fill="#ff00ff"/>
<rect x="355" y="286" width="1" height="2" fill="#ff00ff"/>
<rect x="356" y="285" width="1" height="3" fill="#ff00ff"/>
<rect x="357" y="285" width="1" height="3" fill="#ff00ff"/>
<rect x="358" y="283" width="1" height="5" fill="#ff00ff"/>
<rect x="359" y="283" width="1" height="4" fill="#ff00ff"/>
<rect x="360" y="284" width="1" height="3" fill="#ff00ff"/>
<rect x="361" y="284" width="1" height="5" fill="#ff00ff"/>
<rect x="362" y="287" width="1" height="5" fill="#ff00ff"/>
<rect x="363" y="290" width="1" height="3" fill="#ff00ff"/>
<rect x="364" y="286" width="1" height="7" fill="#ff00ff"/>
<rect x="365" y="283" width="1" height="5" fill="#ff00ff"/>
<rect x="366" y="283" width="1" height="5" fill="#ff00ff"/>
<rect x="367" y="285" width="1" height="3" fill="#ff00ff"/>
<rect x="368" y="285" width="1" height="7" fill="#ff00ff"/>
<rect x="369" y="287" width="1" height="5" fill="#ff00ff"/>
<rect x="370" y="285" width="1" height="4" fill="#ff00ff"/>
<rect x="371" y="285" width="1" height="5" fill="#ff00ff"/>
<rect x="372" y="287" width="1" height="3" fill="#ff00ff"/>
<rect x="373" y="283" width="1" height="6" fill="#ff00ff"/>
<rect x="374" y="283" width="1" height="4" fill="#ff00ff"/>
<rect x="375" y="285" width="1" height="3" fill="#ff00ff"/>
<rect x="376" y="286" width="1" height="2" fill="#ff00ff"/>
<rect x="377" y="286" width="1" height="2" fill="#ff00ff"/>
<rect x="378" y="286" width="1" height="2" fill="#ff00ff"/>
<rect x="379" y="286" width="1" height="2" fill="#ff00ff"/>
<rect x="380" y="285" width="1" height="3" fill="#ff00ff"/>
<rect x="381" y="285" width="1" height="2" fill="#ff00ff"/>
<rect x="382" y="285" width="1" height="6" fill="#ff00ff"/>
<rect x="383" y="287" width="1" height="4" fill="#ff00ff"/>
<rect x="384" y="287" width="1" height="2" fill="#ff00ff"/>
<rect x="385" y="283" width="1" height="6" fill="#ff00ff"/>
<rect x="386" y="283" width="1" height="5" fill="#ff00ff"/>
<rect x="387" y="286" width="1" height="4" fill="#ff00ff"/>
<rect x="388" y="284" width="1" height="6" fill="#ff00ff"/>
<rect x="389" y="284" width="1" height="6" fill="#ff00ff"/>
<rect x="390" y="285" width="1" height="5" fill="#ff00ff"/>
<rect x="391" y="285" width="1" height="4" fill="#ff00ff"/>
<rect x="392" y="286" width="1" height="3" fill="#ff00ff"/>
<rect x="393" y="286" width="1" height="2" fill="#ff00ff"/>
<rect x="394" y="286" width="1" height="4" fill="#ff00ff"/>
<rect x="395" y="285" width="1" height="5" fill="#ff00ff"/>
<rect x="396" y="285" width="1" height="6" fill="#ff00ff"/>
<rect x="397" y="285" width="1" height="6" fill="#ff00ff"/>
<rect x="398" y="284" width="1" height="3" fill="#ff00ff"/>
<rect x="399" y="284" width="1" height="5" fill="#ff00ff"/>
<rect x="400" y="284" width="1" height="5" fill="#ff00ff"/>
<rect x="401" y="284" width="1" height="3" fill="#ff00ff"/>
<rect x="402" y="285" width="1" height="5" fill="#ff00ff"/>
<rect x="403" y="288" width="1" height="2" fill="#ff00ff"/>
<rect x="404" y="283" width="1" height="7" fill="#ff00ff"/>
<rect x="405" y="283" width="1" height="6" fill="#ff00ff"/>
<rect x="406" y="287" width="1" height="4" fill="#ff00ff"/>
<rect x="407" y="288" width="1" height="3" fill="#ff00ff"/>
<rect x="408" y="286" width="1" height="4" fill="#ff00ff"/>
<rect x="409" y="285" width="1" height="3" fill="#ff00ff"/>
<rect x="410" y="285" width="1" height="3" fill="#ff00ff"/>
<rect x="411" y="284" width="1" height="4" fill="#ff00ff"/>
<rect x="412" y="284" width="1" height="4" fill="#ff00ff"/>
<rect x="413" y="286" width="1" height="2" fill="#ff00ff"/>
<rect x="414" y="286" width="1" height="2" fill="#ff00ff"/>
<rect x="415" y="286" width="1" height="4" fill="#ff00ff"/>
<rect x="416" y="286" width="1" height="4" fill="#ff00ff"/>
<rect x="417" y="283" width="1" height="5" fill="#ff00ff"/>
<rect x="418" y="283" width="1" height="7" fill="#ff00ff"/>
<rect x="419" y="284" width="1" height="6" fill="#ff00ff"/>
<rect x="420" y="284" width="1" height="3" fill="#ff00ff"/>
<rect x="421" y="285" width="1" height="3" fill="#ff00ff"/>
<rect x="422" y="285" width="1" height="3" fill="#ff00ff"/>
<rect x="423" y="284" width="1" height="3" fill="#ff00ff"/>
<rect x="424" y="284" width="1" height="4" fill="#ff00ff"/>
<rect x="425" y="286" width="1" height="7" fill="#ff00ff"/>
<rect x="426" y="286" width="1" height="7" fill="#ff00ff"/>
<rect x="427" y="286" width="1" height="3" fill="#ff00ff"/>
<rect x="428" y="287" width="1" height="4" fill="#ff00ff"/>
<rect x="429" y="288" width="1" height="3" fill="#ff00ff"/>
<rect x="430" y="288" width="1" height="2" fill="#ff00ff"/>
<rect x="431" y="288" width="1" height="2" fill="#ff00ff"/>
<rect x="432" y="284" width="1" height="6" fill="#ff00ff"/>
<rect x="433" y="284" width="1" height="3" fill="#ff00ff"/>
<rect x="434" y="285" width="1" height="4" fill="#ff00ff"/>
<rect x="435" y="287" width="1" height="3" fill="#ff00ff"/>
<rect x="436" y="288" width="1" height="3" fill="#ff00ff"/>
<rect x="437" y="288" width="1" height="3" fill="#ff00ff"/>
<rect x="438" y="286" width="1" height="4" fill="#ff00ff"/>
<rect x="439" y="286" width="1" height="3" fill="#ff00ff"/>
<rect x="440" y="286" width="1" height="3" fill="#ff00ff"/>
<rect x="441" y="286" width="1" height="3" fill="#ff00ff"/>
<rect x="442" y="287" width="1" height="3" fill="#ff00ff"/>
<rect x="443" y="286" width="1" height="4" fill="#ff00ff"/>
<rect x="444" y="285" width="1" height="3" fill="#ff00ff"/>
<rect x="445" y="285" width="1" height="2" fill="#ff00ff"/>
<rect x="446" y="285" width="1" height="6" fill="#ff00ff"/>
<rect x="447" y="289" width="1" height="2" fill="#ff00ff"/>
<rect x="448" y="289" width="1" height="2" fill="#ff00ff"/>
<rect x="449" y="288" width="1" height="3" fill="#ff00ff"/>
<rect x="450" y="288" width="1" height="2" fill="#ff00ff"/>
<rect x="451" y="287" width="1" height="3" fill="#ff00ff"/>
<rect x="452" y="287" width="1" height="3" fill="#ff00ff"/>
<rect x="453" y="285" width="1" height="5" fill="#ff00ff"/>
<rect x="454" y="285" width="1" height="3" fill="#ff00ff"/>
<rect x="455" y="286" width="1" height="2" fill="#ff00ff"/>
<rect x="456" y="286" width="1" height="4" fill="#ff00ff"/>
<rect x="457" y="286" width="1" height="4" fill="#ff00ff"/>
<rect x="458" y="286" width="1" height="3" fill="#ff00ff"/>
<rect x="459" y="287" width="1" height="2" fill="#ff00ff"/>
<rect x="460" y="287" width="1" height="4" fill="#ff00ff"/>
<rect x="461" y="285" width="1" height="6" fill="#ff00ff"/>
<rect x="462" y="285" width="1" height="2" fill="#ff00ff"/>
<rect x="463" y="285" width="1" height="5" fill="#ff00ff"/>
<rect x="464" y="285" width="1" height="5" fill="#ff00ff"/>
<rect x="465" y="285" width="1" height="4" fill="#ff00ff"/>
<rect x="466" y="286" width="1" height="3" fill="#ff00ff"/>
<rect x="467" y="286" width="1" height="3" fill="#ff00ff"/>
<rect x="468" y="284" width="1" height="5" fill="#ff00ff"/>
<rect x="469" y="284" width="1" height="5" fill="#ff00ff"/>
<rect x="470" y="285" width="1" height="4" fill="#ff00ff"/>
<rect x="471" y="284" width="1" height="3" fill="#ff00ff"/>
<rect x="472" y="284" width="1" height="7" fill="#ff00ff"/>
<rect x="473" y="287" width="1" height="4" fill="#ff00ff"/>
<rect x="474" y="287" width="1" height="7" fill="#ff00ff"/>
<rect x="475" y="286" width="1" height="8" fill="#ff00ff"/>
<rect x="476" y="285" width="1" height="3" fill="#ff00ff"/>
<rect x="477" y="285" width="1" height="3" fill="#ff00ff"/>
<rect x="478" y="286" width="1" height="4" fill="#ff00ff"/>
<rect x="479" y="286" width="1" height="4" fill="#ff00ff"/>
<rect x="480" y="286" width="1" height="2" fill="#ff00ff"/>
<rect x="481" y="286" width="1" height="2" fill="#ff00ff"/>
<rect x="482" y="284" width="1" height="4" fill="#ff00ff"/>
<rect x="483" y="284" width="1" height="4" fill="#ff00ff"/>
<rect x="484" y="284" width="1" height="4" fill="#ff00ff"/>
<rect x="485" y="283" width="1" height="3" fill="#ff00ff"/>
<rect x="486" y="283" width="1" height="6" fill="#ff00ff"/>
<rect x="487" y="286" width="1" height="3" fill="#ff00ff"/>
<rect x="488" y="285" width="1" height="3" fill="#ff00ff"/>
<rect x="489" y="283" width="1" height="4" fill="#ff00ff"/>
<rect x="490" y="281" width="1" height="4" fill="#ff00ff"/>
<rect x="491" y="281" width="1" height="6" fill="#ff00ff"/>
<rect x="492" y="284" width="1" height="3" fill="#ff00ff"/>
<rect x="493" y="282" width="1" height="4" fill="#ff00ff"/>
<rect x="494" y="282" width="1" height="4" fill="#ff00ff"/>
<rect x="495" y="282" width="1" height="4" fill="#ff00ff"/>
<rect x="496" y="282" width="1" height="4" fill="#ff00ff"/>
<rect x="497" y="284" width="1" height="2" fill="#ff00ff"/>
<rect x="498" y="284" width="1" height="3" fill="#ff00ff"/>
<rect x="499" y="284" width="1" height="3" fill="#ff00ff"/>
<rect x="500" y="284" width="1" height="2" fill="#ff00ff"/>
<rect x="501" y="282" width="1" height="4" fill="#ff00ff"/>
<rect x="502" y="282" width="1" height="3" fill="#ff00ff"/>
<rect x="503" y="283" width="1" height="2" fill="#ff00ff"/>
<rect x="504" y="283" width="1" height="2" fill="#ff00ff"/>
<rect x="505" y="283" width="1" height="3" fill="#ff00ff"/>
<rect x="506" y="284" width="1" height="2" fill="#ff00ff"/>
<rect x="507" y="284" width="1" height="4" fill="#ff00ff"/>
<rect x="508" y="279" width="1" height="9" fill="#ff00ff"/>
<rect x="509" y="279" width="1" height="7" fill="#ff00ff"/>
<rect x="510" y="283" width="1" height="3" fill="#ff00ff"/>
<rect x="511" y="283" width="1" height="6" fill="#ff00ff"/>
<rect x="512" y="285" width="1" height="4" fill="#ff00ff"/>
<rect x="516" y="223" width="1" height="132" fill="#c8c8c8"/>
<text stroke="#000" x="42.41" y="77" font-size="12" fill="#000" textLength="12.01" lengthAdjust="spacingAndGlyphs">50</text>
<text stroke="#000" x="42.41" y="104" font-size="12" fill="#000" textLength="12.01" lengthAdjust="spacingAndGlyphs">40</text>
<text stroke="#000" x="42.41" y="130" font-size="12" fill="#000" textLength="12.01" lengthAdjust="spacingAndGlyphs">30</text>
<text stroke="#000" x="42.41" y="156" font-size="12" fill="#000" textLength="12.01" lengthAdjust="spacingAndGlyphs">20</text>
<text stroke="#000" x="42.41" y="182" font-size="12" fill="#000" textLength="12.01" lengthAdjust="spacingAndGlyphs">10</text>
<text stroke="#000" x="532.46" y="192" font-size="12" fill="#000" textLength="6.01" lengthAdjust="spacingAndGlyphs">2</text>
<text stroke="#000" x="532.75" y="176" font-size="12" fill="#000" textLength="6.01" lengthAdjust="spacingAndGlyphs">4</text>
<text stroke="#000" x="532.45" y="159" font-size="12" fill="#000" textLength="6.01" lengthAdjust="spacingAndGlyphs">6</text>
<text stroke="#000" x="532.53" y="143" font-size="12" fill="#000" textLength="6.01" lengthAdjust="spacingAndGlyphs">8</text>
<text stroke="#000" x="532.18" y="127" font-size="12" fill="#000" textLength="12.01" lengthAdjust="spacingAndGlyphs">10</text>
<text stroke="#000" x="532.18" y="110" font-size="12" fill="#000" textLength="12.01" lengthAdjust="spacingAndGlyphs">12</text>
<text stroke="#000" x="532.18" y="94" font-size="12" fill="#000" textLength="12.01" lengthAdjust="spacingAndGlyphs">14</text>
<text stroke="#000" x="532.18" y="77" font-size="12" fill="#000" textLength="12.01" lengthAdjust="spacingAndGlyphs">16</text>
<text stroke="#000" x="56.34" y="217" font-size="12" fill="#000" textLength="14.18" lengthAdjust="spacingAndGlyphs">0.0</text>
<text stroke="#000" x="56.34" y="367" font-size="12" fill="#000" textLength="14.18" lengthAdjust="spacingAndGlyphs">0.0</text>
<text stroke="#000" x="108.22" y="217" font-size="12" fill="#000" textLength="14.18" lengthAdjust="spacingAndGlyphs">0.5</text>
<text stroke="#000" x="108.22" y="367" font-size="12" fill="#000" textLength="14.18" lengthAdjust="spacingAndGlyphs">0.5</text>
<text stroke="#000" x="159.87" y="217" font-size="12" fill="#000" textLength="14.18" lengthAdjust="spacingAndGlyphs">1.0</text>
<text stroke="#000" x="159.87" y="367" font-size="12" fill="#000" textLength="14.18" lengthAdjust="spacingAndGlyphs">1.0</text>
<text stroke="#000" x="211.75" y="217" font-size="12" fill="#000" textLength="14.18" lengthAdjust="spacingAndGlyphs">1.5</text>
<text stroke="#000" x="211.75" y="367" font-size="12" fill="#000" textLength="14.18" lengthAdjust="spacingAndGlyphs">1.5</text>
<text stroke="#000" x="263.72" y="217" font-size="12" fill="#000" textLength="14.18" lengthAdjust="spacingAndGlyphs">2.0</text>
<text stroke="#000" x="263.72" y="367" font-size="12" fill="#000" textLength="14.18" lengthAdjust="spacingAndGlyphs">2.0</text>
<text stroke="#000" x="315.60" y="217" font-size="12" fill="#000" textLength="14.18" lengthAdjust="spacingAndGlyphs">2.5</text>
<text stroke="#000" x="315.60" y="367" font-size="12" fill="#000" textLength="14.18" lengthAdjust="spacingAndGlyphs">2.5</text>
<text stroke="#000" x="367.51" y="217" font-size="12" fill="#000" textLength="14.18" lengthAdjust="spacingAndGlyphs">3.0</text>
<text stroke="#000" x="367.51" y="367" font-size="12" fill="#000" textLength="14.18" lengthAdjust="spacingAndGlyphs">3.0</text>
<text stroke="#000" x="419.38" y="217" font-size="12" fill="#000" textLength="14.18" lengthAdjust="spacingAndGlyphs">3.5</text>
<text stroke="#000" x="419.38" y="367" font-size="12" fill="#000" textLength="14.18" lengthAdjust="spacingAndGlyphs">3.5</text>
<text stroke="#000" x="471.30" y="217" font-size="12" fill="#000" textLength="14.18" lengthAdjust="spacingAndGlyphs">4.0</text>
<text stroke="#000" x="471.30" y="367" font-size="12" fill="#000" textLength="14.18" lengthAdjust="spacingAndGlyphs">4.0</text>
<text stroke="#000" x="523.18" y="217" font-size="12" fill="#000" textLength="14.18" lengthAdjust="spacingAndGlyphs">4.5</text>
<text stroke="#000" x="523.18" y="367" font-size="12" fill="#000" textLength="14.18" lengthAdjust="spacingAndGlyphs">4.5</text>
<text stroke="#000" x="42.41" y="227" font-size="12" fill="#000" textLength="12.01" lengthAdjust="spacingAndGlyphs">10</text>
<text stroke="#000" x="48.46" y="254" font-size="12" fill="#000" textLength="6.01" lengthAdjust="spacingAndGlyphs">8</text>
<text stroke="#000" x="48.47" y="280" font-size="12" fill="#000" textLength="6.01" lengthAdjust="spacingAndGlyphs">6</text>
<text stroke="#000" x="48.31" y="306" font-size="12" fill="#000" textLength="6.01" lengthAdjust="spacingAndGlyphs">4</text>
<text stroke="#000" x="48.54" y="332" font-size="12" fill="#000" textLength="6.01" lengthAdjust="spacingAndGlyphs">2</text>
<text stroke="#000" x="532.46" y="227" font-size="12" fill="#000" textLength="12.01" lengthAdjust="spacingAndGlyphs">20</text>
<text stroke="#000" x="532.18" y="254" font-size="12" fill="#000" textLength="12.01" lengthAdjust="spacingAndGlyphs">16</text>
<text stroke="#000" x="532.18" y="280" font-size="12" fill="#000" textLength="12.01" lengthAdjust="spacingAndGlyphs">12</text>
<text stroke="#000" x="532.53" y="306" font-size="12" fill="#000" textLength="6.01" lengthAdjust="spacingAndGlyphs">8</text>
<text stroke="#000" x="532.75" y="332" font-size="12" fill="#000" textLength="6.01" lengthAdjust="spacingAndGlyphs">4</text>
<text stroke="#000" x="267.74" y="68" font-size="12" fill="#000" textLength="263.07" lengthAdjust="spacingAndGlyphs">recorded with PIONEER DVD-RW  DVR-108  v1.18</text>
<rect x="18" y="374" width="8" height="1" fill="#808080"/>
<rect x="89" y="374" width="99" height="1" fill="#808080"/>
<rect x="18" y="374" width="1" height="63" fill="#808080"/>
<rect x="187" y="374" width="1" height="63" fill="#808080"/>
<rect x="18" y="436" width="170" height="1" fill="#808080"/>
<rect x="28" y="371" width="8" height="8" fill="#000000"/>
<rect x="29" y="372" width="6" height="6" fill="#00ffff"/>
<text stroke="#000" x="39.47" y="378" font-size="12" fill="#000" textLength="44.95" lengthAdjust="spacingAndGlyphs">PI Errors</text>
<rect x="198" y="374" width="8" height="1" fill="#808080"/>
<rect x="279" y="374" width="89" height="1" fill="#808080"/>
<rect x="198" y="374" width="1" height="63" fill="#808080"/>
<rect x="367" y="374" width="1" height="63" fill="#808080"/>
<rect x="198" y="436" width="170" height="1" fill="#808080"/>
<rect x="208" y="371" width="8" height="8" fill="#000000"/>
<rect x="209" y="372" width="6" height="6" fill="#ffff00"/>
<text stroke="#000" x="219.45" y="378" font-size="12" fill="#000" textLength="55.27" lengthAdjust="spacingAndGlyphs">PI Failures</text>
<rect x="379" y="374" width="8" height="1" fill="#808080"/>
<rect x="427" y="374" width="122" height="1" fill="#808080"/>
<rect x="379" y="374" width="1" height="47" fill="#808080"/>
<rect x="548" y="374" width="1" height="47" fill="#808080"/>
<rect x="379" y="420" width="170" height="1" fill="#808080"/>
<rect x="389" y="371" width="8" height="8" fill="#000000"/>
<rect x="390" y="372" width="6" height="6" fill="#ff00ff"/>
<text stroke="#000" x="401.41" y="378" font-size="12" fill="#000" textLength="25.78" lengthAdjust="spacingAndGlyphs">Jitter</text>
<text stroke="#000" x="26.34" y="393" font-size="12" fill="#000" style="stroke-width:0.15px" textLength="27.98" lengthAdjust="spacingAndGlyphs">平均:</text>
<text stroke="#000" x="26.34" y="411" font-size="12" fill="#000" style="stroke-width:0.15px" textLength="27.98" lengthAdjust="spacingAndGlyphs">最大:</text>
<text stroke="#000" x="26.27" y="429" font-size="12" fill="#000" style="stroke-width:0.15px" textLength="31.60" lengthAdjust="spacingAndGlyphs">合計 :</text>
<text stroke="#000" x="208.36" y="393" font-size="12" fill="#000" style="stroke-width:0.15px" textLength="27.02" lengthAdjust="spacingAndGlyphs">平均:</text>
<text stroke="#000" x="208.36" y="411" font-size="12" fill="#000" style="stroke-width:0.15px" textLength="27.02" lengthAdjust="spacingAndGlyphs">最大:</text>
<text stroke="#000" x="208.29" y="429" font-size="12" fill="#000" style="stroke-width:0.15px" textLength="30.64" lengthAdjust="spacingAndGlyphs">合計 :</text>
<text stroke="#000080" x="154.86" y="393" font-size="12" fill="#000080" textLength="20.55" lengthAdjust="spacingAndGlyphs">7.40</text>
<text stroke="#000080" x="163.21" y="411" font-size="12" fill="#000080" textLength="11.75" lengthAdjust="spacingAndGlyphs">28</text>
<text stroke="#000080" x="145.65" y="429" font-size="12" fill="#000080" textLength="29.36" lengthAdjust="spacingAndGlyphs">88791</text>
<text stroke="#000080" x="336.46" y="393" font-size="12" fill="#000080" textLength="20.55" lengthAdjust="spacingAndGlyphs">0.01</text>
<text stroke="#000080" x="350.59" y="411" font-size="12" fill="#000080" textLength="5.87" lengthAdjust="spacingAndGlyphs">3</text>
<text stroke="#000080" x="345.20" y="429" font-size="12" fill="#000080" textLength="11.75" lengthAdjust="spacingAndGlyphs">55</text>
<text stroke="#000" x="388.47" y="393" font-size="12" fill="#000" style="stroke-width:0.15px" textLength="26.38" lengthAdjust="spacingAndGlyphs">平均:</text>
<text stroke="#000" x="388.47" y="411" font-size="12" fill="#000" style="stroke-width:0.15px" textLength="26.38" lengthAdjust="spacingAndGlyphs">最大:</text>
<text stroke="#000080" x="506.00" y="393" font-size="12" fill="#000080" textLength="32.88" lengthAdjust="spacingAndGlyphs">9.90 %</text>
<text stroke="#000080" x="506.00" y="411" font-size="12" fill="#000080" textLength="32.88" lengthAdjust="spacingAndGlyphs">11.5 %</text>
<text stroke="#000" x="388.58" y="434" font-size="12" fill="#000" textLength="62.45" lengthAdjust="spacingAndGlyphs">PO Failures:</text>
<text stroke="#000080" x="531.84" y="434" font-size="12" fill="#000080" textLength="5.87" lengthAdjust="spacingAndGlyphs">0</text>
<rect x="562.5" y="59.5" width="67" height="18" fill="#ffffff" rx="2.5" stroke="#2a8a8a" stroke-width="1" shape-rendering="auto"/>
<rect x="563" y="70" width="66" height="6" fill="#c4c4c4"/>
<rect x="564" y="71" width="1" height="1" fill="#ffffff"/>
<rect x="566" y="71" width="1" height="1" fill="#ffffff"/>
<rect x="568" y="71" width="1" height="1" fill="#ffffff"/>
<rect x="570" y="71" width="1" height="1" fill="#ffffff"/>
<rect x="572" y="71" width="1" height="1" fill="#ffffff"/>
<rect x="574" y="71" width="1" height="1" fill="#ffffff"/>
<rect x="576" y="71" width="1" height="1" fill="#ffffff"/>
<rect x="578" y="71" width="1" height="1" fill="#ffffff"/>
<rect x="580" y="71" width="1" height="1" fill="#ffffff"/>
<rect x="582" y="71" width="1" height="1" fill="#ffffff"/>
<rect x="584" y="71" width="1" height="1" fill="#ffffff"/>
<rect x="586" y="71" width="1" height="1" fill="#ffffff"/>
<rect x="588" y="71" width="1" height="1" fill="#ffffff"/>
<rect x="590" y="71" width="1" height="1" fill="#ffffff"/>
<rect x="592" y="71" width="1" height="1" fill="#ffffff"/>
<rect x="594" y="71" width="1" height="1" fill="#ffffff"/>
<rect x="596" y="71" width="1" height="1" fill="#ffffff"/>
<rect x="598" y="71" width="1" height="1" fill="#ffffff"/>
<rect x="600" y="71" width="1" height="1" fill="#ffffff"/>
<rect x="602" y="71" width="1" height="1" fill="#ffffff"/>
<rect x="604" y="71" width="1" height="1" fill="#ffffff"/>
<rect x="606" y="71" width="1" height="1" fill="#ffffff"/>
<rect x="608" y="71" width="1" height="1" fill="#ffffff"/>
<rect x="610" y="71" width="1" height="1" fill="#ffffff"/>
<rect x="612" y="71" width="1" height="1" fill="#ffffff"/>
<rect x="614" y="71" width="1" height="1" fill="#ffffff"/>
<rect x="616" y="71" width="1" height="1" fill="#ffffff"/>
<rect x="618" y="71" width="1" height="1" fill="#ffffff"/>
<rect x="620" y="71" width="1" height="1" fill="#ffffff"/>
<rect x="622" y="71" width="1" height="1" fill="#ffffff"/>
<rect x="624" y="71" width="1" height="1" fill="#ffffff"/>
<rect x="626" y="71" width="1" height="1" fill="#ffffff"/>
<rect x="564" y="76" width="64" height="1" fill="#909090"/>
<text stroke="#000" x="583.3" y="72" font-size="12" fill="#000" textLength="24.2" lengthAdjust="spacingAndGlyphs">開始</text>
<rect x="654.5" y="59.5" width="67" height="18" fill="#ffffff" rx="2.5" stroke="#2a8a8a" stroke-width="1" shape-rendering="auto"/>
<rect x="655" y="70" width="66" height="6" fill="#c4c4c4"/>
<rect x="656" y="71" width="1" height="1" fill="#ffffff"/>
<rect x="658" y="71" width="1" height="1" fill="#ffffff"/>
<rect x="660" y="71" width="1" height="1" fill="#ffffff"/>
<rect x="662" y="71" width="1" height="1" fill="#ffffff"/>
<rect x="664" y="71" width="1" height="1" fill="#ffffff"/>
<rect x="666" y="71" width="1" height="1" fill="#ffffff"/>
<rect x="668" y="71" width="1" height="1" fill="#ffffff"/>
<rect x="670" y="71" width="1" height="1" fill="#ffffff"/>
<rect x="672" y="71" width="1" height="1" fill="#ffffff"/>
<rect x="674" y="71" width="1" height="1" fill="#ffffff"/>
<rect x="676" y="71" width="1" height="1" fill="#ffffff"/>
<rect x="678" y="71" width="1" height="1" fill="#ffffff"/>
<rect x="680" y="71" width="1" height="1" fill="#ffffff"/>
<rect x="682" y="71" width="1" height="1" fill="#ffffff"/>
<rect x="684" y="71" width="1" height="1" fill="#ffffff"/>
<rect x="686" y="71" width="1" height="1" fill="#ffffff"/>
<rect x="688" y="71" width="1" height="1" fill="#ffffff"/>
<rect x="690" y="71" width="1" height="1" fill="#ffffff"/>
<rect x="692" y="71" width="1" height="1" fill="#ffffff"/>
<rect x="694" y="71" width="1" height="1" fill="#ffffff"/>
<rect x="696" y="71" width="1" height="1" fill="#ffffff"/>
<rect x="698" y="71" width="1" height="1" fill="#ffffff"/>
<rect x="700" y="71" width="1" height="1" fill="#ffffff"/>
<rect x="702" y="71" width="1" height="1" fill="#ffffff"/>
<rect x="704" y="71" width="1" height="1" fill="#ffffff"/>
<rect x="706" y="71" width="1" height="1" fill="#ffffff"/>
<rect x="708" y="71" width="1" height="1" fill="#ffffff"/>
<rect x="710" y="71" width="1" height="1" fill="#ffffff"/>
<rect x="712" y="71" width="1" height="1" fill="#ffffff"/>
<rect x="714" y="71" width="1" height="1" fill="#ffffff"/>
<rect x="716" y="71" width="1" height="1" fill="#ffffff"/>
<rect x="718" y="71" width="1" height="1" fill="#ffffff"/>
<rect x="656" y="76" width="64" height="1" fill="#909090"/>
<rect x="656" y="61" width="1" height="1" fill="#000"/>
<rect x="656" y="75" width="1" height="1" fill="#000"/>
<rect x="658" y="61" width="1" height="1" fill="#000"/>
<rect x="658" y="75" width="1" height="1" fill="#000"/>
<rect x="660" y="61" width="1" height="1" fill="#000"/>
<rect x="660" y="75" width="1" height="1" fill="#000"/>
<rect x="662" y="61" width="1" height="1" fill="#000"/>
<rect x="662" y="75" width="1" height="1" fill="#000"/>
<rect x="664" y="61" width="1" height="1" fill="#000"/>
<rect x="664" y="75" width="1" height="1" fill="#000"/>
<rect x="666" y="61" width="1" height="1" fill="#000"/>
<rect x="666" y="75" width="1" height="1" fill="#000"/>
<rect x="668" y="61" width="1" height="1" fill="#000"/>
<rect x="668" y="75" width="1" height="1" fill="#000"/>
<rect x="670" y="61" width="1" height="1" fill="#000"/>
<rect x="670" y="75" width="1" height="1" fill="#000"/>
<rect x="672" y="61" width="1" height="1" fill="#000"/>
<rect x="672" y="75" width="1" height="1" fill="#000"/>
<rect x="674" y="61" width="1" height="1" fill="#000"/>
<rect x="674" y="75" width="1" height="1" fill="#000"/>
<rect x="676" y="61" width="1" height="1" fill="#000"/>
<rect x="676" y="75" width="1" height="1" fill="#000"/>
<rect x="678" y="61" width="1" height="1" fill="#000"/>
<rect x="678" y="75" width="1" height="1" fill="#000"/>
<rect x="680" y="61" width="1" height="1" fill="#000"/>
<rect x="680" y="75" width="1" height="1" fill="#000"/>
<rect x="682" y="61" width="1" height="1" fill="#000"/>
<rect x="682" y="75" width="1" height="1" fill="#000"/>
<rect x="684" y="61" width="1" height="1" fill="#000"/>
<rect x="684" y="75" width="1" height="1" fill="#000"/>
<rect x="686" y="61" width="1" height="1" fill="#000"/>
<rect x="686" y="75" width="1" height="1" fill="#000"/>
<rect x="688" y="61" width="1" height="1" fill="#000"/>
<rect x="688" y="75" width="1" height="1" fill="#000"/>
<rect x="690" y="61" width="1" height="1" fill="#000"/>
<rect x="690" y="75" width="1" height="1" fill="#000"/>
<rect x="692" y="61" width="1" height="1" fill="#000"/>
<rect x="692" y="75" width="1" height="1" fill="#000"/>
<rect x="694" y="61" width="1" height="1" fill="#000"/>
<rect x="694" y="75" width="1" height="1" fill="#000"/>
<rect x="696" y="61" width="1" height="1" fill="#000"/>
<rect x="696" y="75" width="1" height="1" fill="#000"/>
<rect x="698" y="61" width="1" height="1" fill="#000"/>
<rect x="698" y="75" width="1" height="1" fill="#000"/>
<rect x="700" y="61" width="1" height="1" fill="#000"/>
<rect x="700" y="75" width="1" height="1" fill="#000"/>
<rect x="702" y="61" width="1" height="1" fill="#000"/>
<rect x="702" y="75" width="1" height="1" fill="#000"/>
<rect x="704" y="61" width="1" height="1" fill="#000"/>
<rect x="704" y="75" width="1" height="1" fill="#000"/>
<rect x="706" y="61" width="1" height="1" fill="#000"/>
<rect x="706" y="75" width="1" height="1" fill="#000"/>
<rect x="708" y="61" width="1" height="1" fill="#000"/>
<rect x="708" y="75" width="1" height="1" fill="#000"/>
<rect x="710" y="61" width="1" height="1" fill="#000"/>
<rect x="710" y="75" width="1" height="1" fill="#000"/>
<rect x="712" y="61" width="1" height="1" fill="#000"/>
<rect x="712" y="75" width="1" height="1" fill="#000"/>
<rect x="714" y="61" width="1" height="1" fill="#000"/>
<rect x="714" y="75" width="1" height="1" fill="#000"/>
<rect x="716" y="61" width="1" height="1" fill="#000"/>
<rect x="716" y="75" width="1" height="1" fill="#000"/>
<rect x="718" y="61" width="1" height="1" fill="#000"/>
<rect x="718" y="75" width="1" height="1" fill="#000"/>
<rect x="656" y="61" width="1" height="1" fill="#000"/>
<rect x="719" y="61" width="1" height="1" fill="#000"/>
<rect x="656" y="63" width="1" height="1" fill="#000"/>
<rect x="719" y="63" width="1" height="1" fill="#000"/>
<rect x="656" y="65" width="1" height="1" fill="#000"/>
<rect x="719" y="65" width="1" height="1" fill="#000"/>
<rect x="656" y="67" width="1" height="1" fill="#000"/>
<rect x="719" y="67" width="1" height="1" fill="#000"/>
<rect x="656" y="69" width="1" height="1" fill="#000"/>
<rect x="719" y="69" width="1" height="1" fill="#000"/>
<rect x="656" y="71" width="1" height="1" fill="#000"/>
<rect x="719" y="71" width="1" height="1" fill="#000"/>
<rect x="656" y="73" width="1" height="1" fill="#000"/>
<rect x="719" y="73" width="1" height="1" fill="#000"/>
<rect x="656" y="75" width="1" height="1" fill="#000"/>
<rect x="719" y="75" width="1" height="1" fill="#000"/>
<text stroke="#000" x="667.5" y="72" font-size="12" fill="#000" textLength="38.5" lengthAdjust="spacingAndGlyphs">終了(X)</text>
<rect x="695" y="75" width="6" height="1" fill="#000"/>
<path d="M564.5 89.5H719.5L722.5 92.5V152.5L719.5 155.5H564.5L561.5 152.5V92.5Z" fill="none" stroke="#c0c0c0" stroke-width="1" shape-rendering="auto"/>
<rect x="566" y="88" width="64" height="3" fill="#ffffff"/>
<text stroke="#008080" x="568.21" y="92" font-size="12" fill="#008080" style="stroke-width:0.15px" textLength="59.69" lengthAdjust="spacingAndGlyphs">ディスク情報</text>
<text stroke="#000" x="567.90" y="105" font-size="12" fill="#000" style="stroke-width:0.15px" textLength="30.00" lengthAdjust="spacingAndGlyphs">タイプ:</text>
<text stroke="#000" x="568.45" y="120" font-size="12" fill="#000" textLength="14.60" lengthAdjust="spacingAndGlyphs">ID:</text>
<text stroke="#000" x="567.42" y="135" font-size="12" fill="#000" style="stroke-width:0.15px" textLength="28.31" lengthAdjust="spacingAndGlyphs">日付:</text>
<text stroke="#000" x="568.48" y="150" font-size="12" fill="#000" textLength="30.54" lengthAdjust="spacingAndGlyphs">Label:</text>
<text stroke="#000080" x="617.01" y="105" font-size="12" fill="#000080" textLength="38.15" lengthAdjust="spacingAndGlyphs">DVD-R</text>
<text stroke="#000080" x="617.77" y="120" font-size="12" fill="#000080" textLength="32.75" lengthAdjust="spacingAndGlyphs">TYG02</text>
<text stroke="#000080" x="616.41" y="135" font-size="12" fill="#000080" textLength="62.08" lengthAdjust="spacingAndGlyphs">6 April 2005</text>
<text stroke="#000080" x="616.47" y="150" font-size="12" fill="#000080" textLength="73.05" lengthAdjust="spacingAndGlyphs">CDS_TEST_B2</text>
<path d="M564.5 161.5H719.5L722.5 164.5V336.5L719.5 339.5H564.5L561.5 336.5V164.5Z" fill="none" stroke="#c0c0c0" stroke-width="1" shape-rendering="auto"/>
<rect x="566" y="160" width="49" height="3" fill="#ffffff"/>
<text stroke="#008080" x="569.06" y="164" font-size="12" fill="#008080" textLength="43.17" lengthAdjust="spacingAndGlyphs">Settings</text>
<text stroke="#000" x="567.81" y="183" font-size="12" fill="#000" style="stroke-width:0.15px" textLength="48.98" lengthAdjust="spacingAndGlyphs">転送速度</text>
<text stroke="#000" x="567.24" y="208" font-size="12" fill="#000" style="stroke-width:0.15px" textLength="25.26" lengthAdjust="spacingAndGlyphs">開始</text>
<text stroke="#000" x="568.00" y="231" font-size="12" fill="#000" style="stroke-width:0.15px" textLength="48.98" lengthAdjust="spacingAndGlyphs">終了位置</text>
<rect x="631" y="170" width="82" height="20" fill="#808080"/>
<rect x="632" y="171" width="80" height="18" fill="#ffffff"/>
<rect x="696" y="171" width="16" height="18" fill="#ffffff"/>
<rect x="697" y="179" width="14" height="9" fill="#c0c0c0"/>
<rect x="695" y="171" width="1" height="18" fill="#a0a0a0"/>
<path d="M700 177 L704 181 L708 177" stroke="#008000" stroke-width="1.6" fill="none"/>
<text stroke="#000" x="633.97" y="184" font-size="12" fill="#000" style="stroke-width:0.15px" textLength="24.47" lengthAdjust="spacingAndGlyphs">最大</text>
<rect x="631.5" y="194.5" width="69" height="17" fill="#fff" stroke="#909090" stroke-width="1" stroke-dasharray="1 1"/>
<text stroke="#000" x="633.05" y="207" font-size="12" fill="#000" textLength="45.75" lengthAdjust="spacingAndGlyphs">0000 MB</text>
<rect x="631.5" y="217.5" width="69" height="17" fill="#fff" stroke="#909090" stroke-width="1" stroke-dasharray="1 1"/>
<text stroke="#000" x="633.24" y="230" font-size="12" fill="#000" textLength="45.56" lengthAdjust="spacingAndGlyphs">4489 MB</text>
<rect x="569.5" y="242.5" width="12" height="12" fill="#fff" stroke="#2a8a8a" stroke-width="1"/>
<text stroke="#000" x="584.15" y="253" font-size="12" fill="#000" textLength="59.00" lengthAdjust="spacingAndGlyphs">Quick Scan</text>
<rect x="569.5" y="261.5" width="12" height="12" fill="#fff" stroke="#2a8a8a" stroke-width="1"/>
<path d="M572 267 L574.5 270 L579 264" stroke="#00d000" stroke-width="2" fill="none"/>
<text stroke="#000" x="584.18" y="272" font-size="12" fill="#000" textLength="68.32" lengthAdjust="spacingAndGlyphs">Show C1/PIE</text>
<rect x="569.5" y="276.5" width="12" height="12" fill="#fff" stroke="#2a8a8a" stroke-width="1"/>
<path d="M572 282 L574.5 285 L579 279" stroke="#00d000" stroke-width="2" fill="none"/>
<text stroke="#000" x="584.17" y="287" font-size="12" fill="#000" textLength="68.29" lengthAdjust="spacingAndGlyphs">Show C2/PIF</text>
<rect x="569.5" y="291.5" width="12" height="12" fill="#fff" stroke="#2a8a8a" stroke-width="1"/>
<path d="M572 297 L574.5 300 L579 294" stroke="#00d000" stroke-width="2" fill="none"/>
<text stroke="#000" x="584.16" y="302" font-size="12" fill="#000" textLength="59.04" lengthAdjust="spacingAndGlyphs">Show Jitter</text>
<rect x="569.5" y="306.5" width="12" height="12" fill="#fff" stroke="#2a8a8a" stroke-width="1"/>
<path d="M572 312 L574.5 315 L579 309" stroke="#00d000" stroke-width="2" fill="none"/>
<text stroke="#000" x="584.19" y="317" font-size="12" fill="#000" textLength="92.82" lengthAdjust="spacingAndGlyphs">Show Read Speed</text>
<rect x="569.5" y="321.5" width="12" height="12" fill="#fff" stroke="#2a8a8a" stroke-width="1"/>
<path d="M572 327 L574.5 330 L579 324" stroke="#00d000" stroke-width="2" fill="none"/>
<text stroke="#000" x="584.19" y="332" font-size="12" fill="#000" textLength="92.83" lengthAdjust="spacingAndGlyphs">Show Write Speed</text>
<path d="M564.5 344.5H719.5L722.5 347.5V364.5L719.5 367.5H564.5L561.5 364.5V347.5Z" fill="none" stroke="#c0c0c0" stroke-width="1" shape-rendering="auto"/>
<text stroke="#000" x="567.77" y="360" font-size="12" fill="#000" style="stroke-width:0.15px" textLength="53.09" lengthAdjust="spacingAndGlyphs">品質スコア:</text>
<text stroke="#000080" x="695.05" y="360" font-size="12" fill="#000080" textLength="11.75" lengthAdjust="spacingAndGlyphs">99</text>
<path d="M564.5 374.5H719.5L722.5 377.5V433.5L719.5 436.5H564.5L561.5 433.5V377.5Z" fill="none" stroke="#c0c0c0" stroke-width="1" shape-rendering="auto"/>
<text stroke="#000" x="567.78" y="393" font-size="12" fill="#000" style="stroke-width:0.15px" textLength="51.86" lengthAdjust="spacingAndGlyphs">進行状況:</text>
<text stroke="#000" x="567.81" y="411" font-size="12" fill="#000" style="stroke-width:0.15px" textLength="49.48" lengthAdjust="spacingAndGlyphs">ポジション:</text>
<text stroke="#000" x="567.74" y="429" font-size="12" fill="#000" style="stroke-width:0.15px" textLength="27.98" lengthAdjust="spacingAndGlyphs">速度:</text>
<text stroke="#000080" x="677.18" y="393" font-size="12" fill="#000080" textLength="30.40" lengthAdjust="spacingAndGlyphs">100 %</text>
<text stroke="#000080" x="660.73" y="411" font-size="12" fill="#000080" textLength="46.38" lengthAdjust="spacingAndGlyphs">4488 MB</text>
<text stroke="#000080" x="677.69" y="429" font-size="12" fill="#000080" textLength="30.53" lengthAdjust="spacingAndGlyphs">8.37 X</text>
</svg></body></html>
